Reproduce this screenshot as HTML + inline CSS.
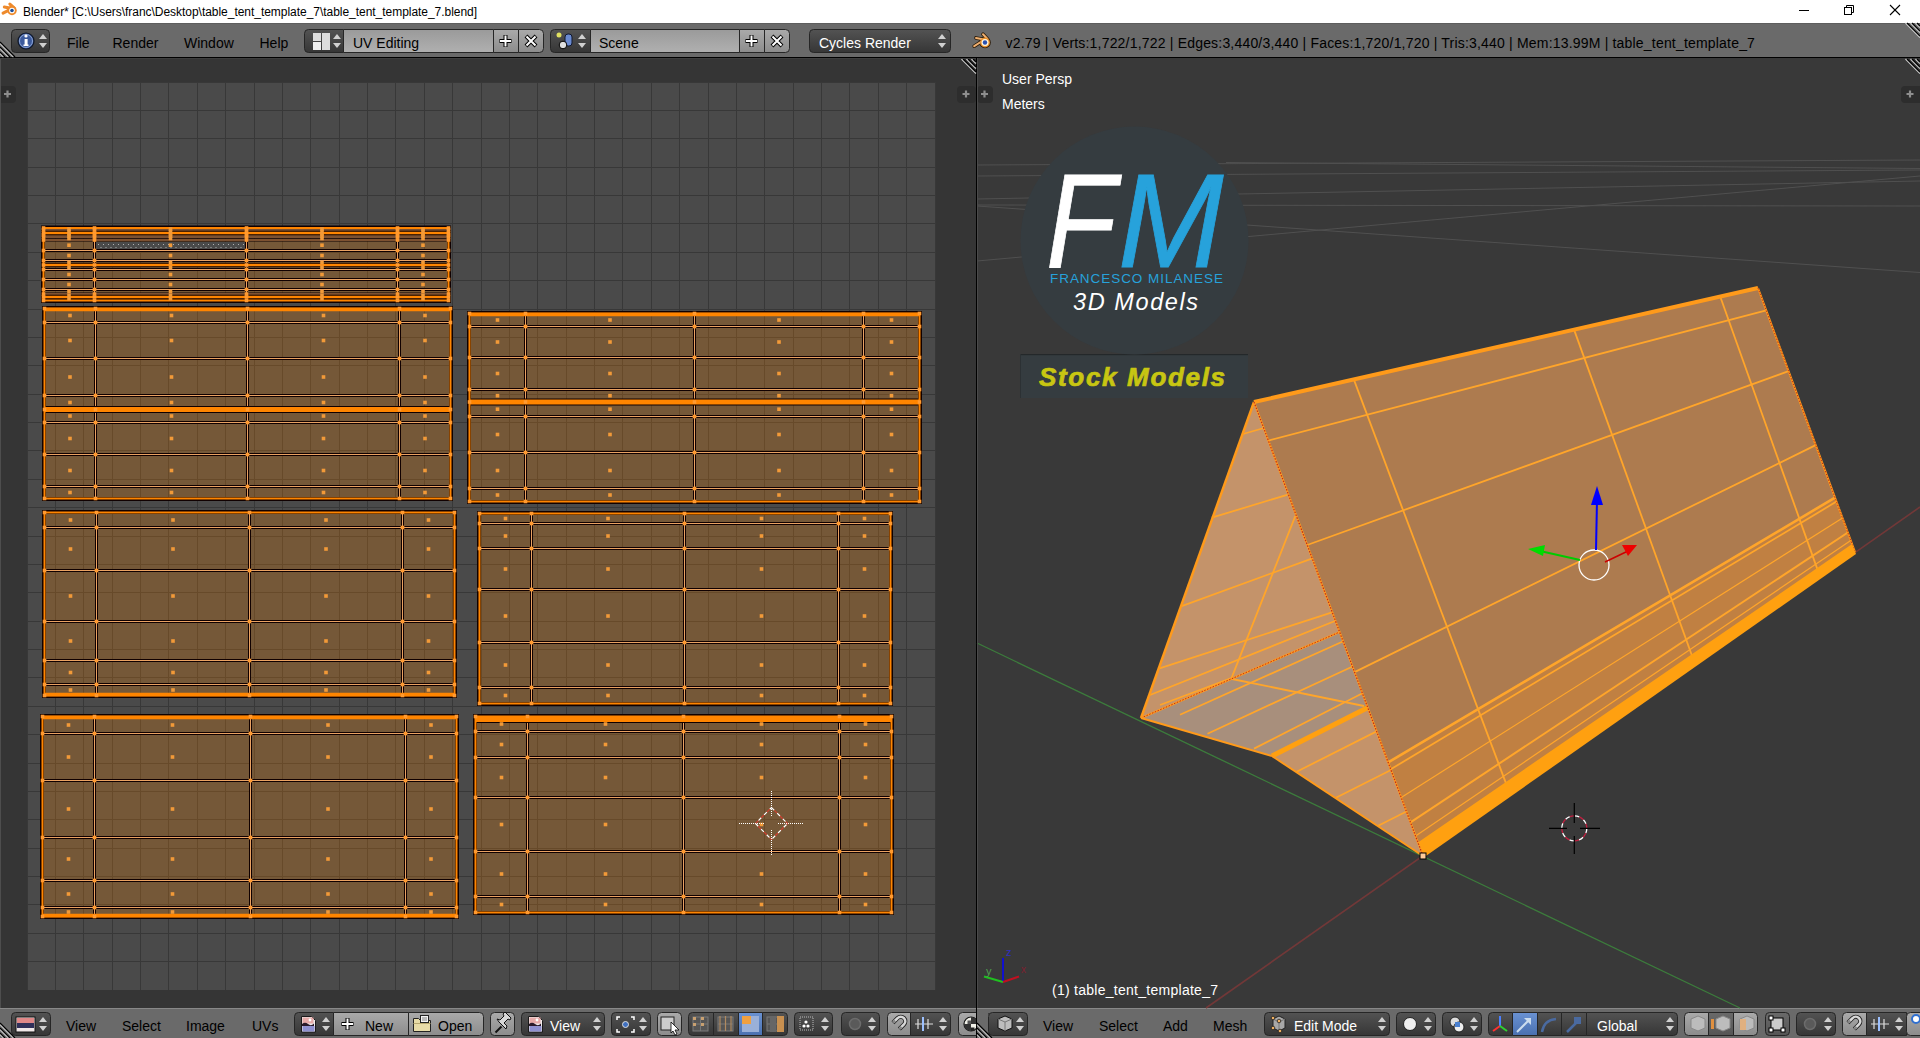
<!DOCTYPE html>
<html><head><meta charset="utf-8"><style>
html,body{margin:0;padding:0;width:1920px;height:1038px;overflow:hidden;background:#393939}
svg{position:absolute;left:0;top:0;font-family:"Liberation Sans", sans-serif}
</style></head><body>
<svg width="1920" height="1038" viewBox="0 0 1920 1038">
<defs>
<linearGradient id="gMenu" x1="0" y1="0" x2="0" y2="1"><stop offset="0" stop-color="#535353"/><stop offset="1" stop-color="#363636"/></linearGradient>
<linearGradient id="gText" x1="0" y1="0" x2="0" y2="1"><stop offset="0" stop-color="#9a9a9a"/><stop offset="1" stop-color="#b0b0b0"/></linearGradient>
<linearGradient id="gTool" x1="0" y1="0" x2="0" y2="1"><stop offset="0" stop-color="#aaaaaa"/><stop offset="1" stop-color="#8c8c8c"/></linearGradient>
<linearGradient id="gMid" x1="0" y1="0" x2="0" y2="1"><stop offset="0" stop-color="#6a6a6a"/><stop offset="1" stop-color="#555555"/></linearGradient>
<linearGradient id="gSel" x1="0" y1="0" x2="0" y2="1"><stop offset="0" stop-color="#6a92d2"/><stop offset="1" stop-color="#4a70b0"/></linearGradient>
</defs><rect x="0" y="0" width="1920" height="1038" fill="#393939" /><rect x="0" y="0" width="1920" height="23" fill="#ffffff" /><rect x="0" y="23" width="1920" height="34" fill="#6a6a6a" /><rect x="0" y="23" width="1920" height="1" fill="#5e5e5e" /><rect x="0" y="57" width="1920" height="1" fill="#000000" /><rect x="0" y="58" width="976" height="950" fill="#353535" /><rect x="976" y="58" width="1" height="950" fill="#000000" /><rect x="977" y="58" width="943" height="950" fill="#393939" /><rect x="0" y="1008" width="976" height="30" fill="#6a6a6a" /><rect x="977" y="1008" width="943" height="30" fill="#6a6a6a" /><rect x="0" y="1008" width="1920" height="1" fill="#888888" /><rect x="27" y="82" width="909" height="908" fill="#4a4a4a"/><rect x="27" y="82" width="1" height="908" fill="#383838"/><rect x="27" y="82" width="909" height="1" fill="#383838"/><rect x="55" y="82" width="1" height="908" fill="#383838"/><rect x="27" y="110" width="909" height="1" fill="#383838"/><rect x="83" y="82" width="1" height="908" fill="#383838"/><rect x="27" y="138" width="909" height="1" fill="#383838"/><rect x="112" y="82" width="1" height="908" fill="#383838"/><rect x="27" y="167" width="909" height="1" fill="#383838"/><rect x="140" y="82" width="1" height="908" fill="#383838"/><rect x="27" y="195" width="909" height="1" fill="#383838"/><rect x="168" y="82" width="1" height="908" fill="#383838"/><rect x="27" y="223" width="909" height="1" fill="#383838"/><rect x="197" y="82" width="1" height="908" fill="#383838"/><rect x="27" y="252" width="909" height="1" fill="#383838"/><rect x="225" y="82" width="1" height="908" fill="#383838"/><rect x="27" y="280" width="909" height="1" fill="#383838"/><rect x="254" y="82" width="1" height="908" fill="#383838"/><rect x="27" y="309" width="909" height="1" fill="#383838"/><rect x="282" y="82" width="1" height="908" fill="#383838"/><rect x="27" y="337" width="909" height="1" fill="#383838"/><rect x="310" y="82" width="1" height="908" fill="#383838"/><rect x="27" y="365" width="909" height="1" fill="#383838"/><rect x="339" y="82" width="1" height="908" fill="#383838"/><rect x="27" y="394" width="909" height="1" fill="#383838"/><rect x="367" y="82" width="1" height="908" fill="#383838"/><rect x="27" y="422" width="909" height="1" fill="#383838"/><rect x="395" y="82" width="1" height="908" fill="#383838"/><rect x="27" y="450" width="909" height="1" fill="#383838"/><rect x="424" y="82" width="1" height="908" fill="#383838"/><rect x="27" y="479" width="909" height="1" fill="#383838"/><rect x="452" y="82" width="1" height="908" fill="#383838"/><rect x="27" y="507" width="909" height="1" fill="#383838"/><rect x="481" y="82" width="1" height="908" fill="#383838"/><rect x="27" y="536" width="909" height="1" fill="#383838"/><rect x="509" y="82" width="1" height="908" fill="#383838"/><rect x="27" y="564" width="909" height="1" fill="#383838"/><rect x="537" y="82" width="1" height="908" fill="#383838"/><rect x="27" y="592" width="909" height="1" fill="#383838"/><rect x="566" y="82" width="1" height="908" fill="#383838"/><rect x="27" y="621" width="909" height="1" fill="#383838"/><rect x="594" y="82" width="1" height="908" fill="#383838"/><rect x="27" y="649" width="909" height="1" fill="#383838"/><rect x="622" y="82" width="1" height="908" fill="#383838"/><rect x="27" y="677" width="909" height="1" fill="#383838"/><rect x="651" y="82" width="1" height="908" fill="#383838"/><rect x="27" y="706" width="909" height="1" fill="#383838"/><rect x="679" y="82" width="1" height="908" fill="#383838"/><rect x="27" y="734" width="909" height="1" fill="#383838"/><rect x="708" y="82" width="1" height="908" fill="#383838"/><rect x="27" y="763" width="909" height="1" fill="#383838"/><rect x="736" y="82" width="1" height="908" fill="#383838"/><rect x="27" y="791" width="909" height="1" fill="#383838"/><rect x="764" y="82" width="1" height="908" fill="#383838"/><rect x="27" y="819" width="909" height="1" fill="#383838"/><rect x="793" y="82" width="1" height="908" fill="#383838"/><rect x="27" y="848" width="909" height="1" fill="#383838"/><rect x="821" y="82" width="1" height="908" fill="#383838"/><rect x="27" y="876" width="909" height="1" fill="#383838"/><rect x="849" y="82" width="1" height="908" fill="#383838"/><rect x="27" y="904" width="909" height="1" fill="#383838"/><rect x="878" y="82" width="1" height="908" fill="#383838"/><rect x="27" y="933" width="909" height="1" fill="#383838"/><rect x="906" y="82" width="1" height="908" fill="#383838"/><rect x="27" y="961" width="909" height="1" fill="#383838"/><rect x="935" y="82" width="1" height="908" fill="#383838"/><rect x="43.5" y="228" width="405.0" height="72.5" fill="rgba(255,133,0,0.24)"/><rect x="96" y="242" width="149" height="7" fill="#4a4a4a"/><rect x="98.0" y="244.0" width="1" height="1" fill="#b0b0b0"/><rect x="103.0" y="244.0" width="1" height="1" fill="#b0b0b0"/><rect x="108.0" y="244.0" width="1" height="1" fill="#b0b0b0"/><rect x="113.0" y="244.0" width="1" height="1" fill="#b0b0b0"/><rect x="118.0" y="244.0" width="1" height="1" fill="#b0b0b0"/><rect x="123.0" y="244.0" width="1" height="1" fill="#b0b0b0"/><rect x="128.0" y="244.0" width="1" height="1" fill="#b0b0b0"/><rect x="133.0" y="244.0" width="1" height="1" fill="#b0b0b0"/><rect x="138.0" y="244.0" width="1" height="1" fill="#b0b0b0"/><rect x="143.0" y="244.0" width="1" height="1" fill="#b0b0b0"/><rect x="148.0" y="244.0" width="1" height="1" fill="#b0b0b0"/><rect x="153.0" y="244.0" width="1" height="1" fill="#b0b0b0"/><rect x="158.0" y="244.0" width="1" height="1" fill="#b0b0b0"/><rect x="163.0" y="244.0" width="1" height="1" fill="#b0b0b0"/><rect x="168.0" y="244.0" width="1" height="1" fill="#b0b0b0"/><rect x="173.0" y="244.0" width="1" height="1" fill="#b0b0b0"/><rect x="178.0" y="244.0" width="1" height="1" fill="#b0b0b0"/><rect x="183.0" y="244.0" width="1" height="1" fill="#b0b0b0"/><rect x="188.0" y="244.0" width="1" height="1" fill="#b0b0b0"/><rect x="193.0" y="244.0" width="1" height="1" fill="#b0b0b0"/><rect x="198.0" y="244.0" width="1" height="1" fill="#b0b0b0"/><rect x="203.0" y="244.0" width="1" height="1" fill="#b0b0b0"/><rect x="208.0" y="244.0" width="1" height="1" fill="#b0b0b0"/><rect x="213.0" y="244.0" width="1" height="1" fill="#b0b0b0"/><rect x="218.0" y="244.0" width="1" height="1" fill="#b0b0b0"/><rect x="223.0" y="244.0" width="1" height="1" fill="#b0b0b0"/><rect x="228.0" y="244.0" width="1" height="1" fill="#b0b0b0"/><rect x="233.0" y="244.0" width="1" height="1" fill="#b0b0b0"/><rect x="238.0" y="244.0" width="1" height="1" fill="#b0b0b0"/><rect x="243.0" y="244.0" width="1" height="1" fill="#b0b0b0"/><rect x="100.5" y="247.0" width="1" height="1" fill="#b0b0b0"/><rect x="105.5" y="247.0" width="1" height="1" fill="#b0b0b0"/><rect x="110.5" y="247.0" width="1" height="1" fill="#b0b0b0"/><rect x="115.5" y="247.0" width="1" height="1" fill="#b0b0b0"/><rect x="120.5" y="247.0" width="1" height="1" fill="#b0b0b0"/><rect x="125.5" y="247.0" width="1" height="1" fill="#b0b0b0"/><rect x="130.5" y="247.0" width="1" height="1" fill="#b0b0b0"/><rect x="135.5" y="247.0" width="1" height="1" fill="#b0b0b0"/><rect x="140.5" y="247.0" width="1" height="1" fill="#b0b0b0"/><rect x="145.5" y="247.0" width="1" height="1" fill="#b0b0b0"/><rect x="150.5" y="247.0" width="1" height="1" fill="#b0b0b0"/><rect x="155.5" y="247.0" width="1" height="1" fill="#b0b0b0"/><rect x="160.5" y="247.0" width="1" height="1" fill="#b0b0b0"/><rect x="165.5" y="247.0" width="1" height="1" fill="#b0b0b0"/><rect x="170.5" y="247.0" width="1" height="1" fill="#b0b0b0"/><rect x="175.5" y="247.0" width="1" height="1" fill="#b0b0b0"/><rect x="180.5" y="247.0" width="1" height="1" fill="#b0b0b0"/><rect x="185.5" y="247.0" width="1" height="1" fill="#b0b0b0"/><rect x="190.5" y="247.0" width="1" height="1" fill="#b0b0b0"/><rect x="195.5" y="247.0" width="1" height="1" fill="#b0b0b0"/><rect x="200.5" y="247.0" width="1" height="1" fill="#b0b0b0"/><rect x="205.5" y="247.0" width="1" height="1" fill="#b0b0b0"/><rect x="210.5" y="247.0" width="1" height="1" fill="#b0b0b0"/><rect x="215.5" y="247.0" width="1" height="1" fill="#b0b0b0"/><rect x="220.5" y="247.0" width="1" height="1" fill="#b0b0b0"/><rect x="225.5" y="247.0" width="1" height="1" fill="#b0b0b0"/><rect x="230.5" y="247.0" width="1" height="1" fill="#b0b0b0"/><rect x="235.5" y="247.0" width="1" height="1" fill="#b0b0b0"/><rect x="240.5" y="247.0" width="1" height="1" fill="#b0b0b0"/><rect x="42.5" y="227" width="407.0" height="74.5" fill="none" stroke="#100000" stroke-width="3"/><line x1="42.50" y1="228.00" x2="449.50" y2="228.00" stroke="#100000" stroke-width="3" /><line x1="42.50" y1="230.00" x2="449.50" y2="230.00" stroke="#100000" stroke-width="3" /><line x1="42.50" y1="233.00" x2="449.50" y2="233.00" stroke="#100000" stroke-width="3" /><line x1="42.50" y1="235.00" x2="449.50" y2="235.00" stroke="#100000" stroke-width="3" /><line x1="42.50" y1="237.00" x2="449.50" y2="237.00" stroke="#100000" stroke-width="3" /><line x1="42.50" y1="240.00" x2="449.50" y2="240.00" stroke="#100000" stroke-width="3" /><line x1="42.50" y1="250.50" x2="449.50" y2="250.50" stroke="#100000" stroke-width="3" /><line x1="42.50" y1="260.50" x2="449.50" y2="260.50" stroke="#100000" stroke-width="3" /><line x1="42.50" y1="265.00" x2="449.50" y2="265.00" stroke="#100000" stroke-width="3" /><line x1="42.50" y1="269.50" x2="449.50" y2="269.50" stroke="#100000" stroke-width="3" /><line x1="42.50" y1="279.50" x2="449.50" y2="279.50" stroke="#100000" stroke-width="3" /><line x1="42.50" y1="289.50" x2="449.50" y2="289.50" stroke="#100000" stroke-width="3" /><line x1="42.50" y1="294.00" x2="449.50" y2="294.00" stroke="#100000" stroke-width="3" /><line x1="42.50" y1="297.00" x2="449.50" y2="297.00" stroke="#100000" stroke-width="3" /><line x1="42.50" y1="300.50" x2="449.50" y2="300.50" stroke="#100000" stroke-width="3" /><line x1="43.50" y1="227.00" x2="43.50" y2="301.50" stroke="#100000" stroke-width="3" /><line x1="94.50" y1="227.00" x2="94.50" y2="301.50" stroke="#100000" stroke-width="3" /><line x1="246.50" y1="227.00" x2="246.50" y2="301.50" stroke="#100000" stroke-width="3" /><line x1="397.50" y1="227.00" x2="397.50" y2="301.50" stroke="#100000" stroke-width="3" /><line x1="448.50" y1="227.00" x2="448.50" y2="301.50" stroke="#100000" stroke-width="3" /><line x1="43.50" y1="228.00" x2="448.50" y2="228.00" stroke="#eaa262" stroke-width="1" /><line x1="43.50" y1="230.00" x2="448.50" y2="230.00" stroke="#eaa262" stroke-width="1" /><line x1="43.50" y1="233.00" x2="448.50" y2="233.00" stroke="#eaa262" stroke-width="1" /><line x1="43.50" y1="235.00" x2="448.50" y2="235.00" stroke="#eaa262" stroke-width="1" /><line x1="43.50" y1="237.00" x2="448.50" y2="237.00" stroke="#eaa262" stroke-width="1" /><line x1="43.50" y1="240.00" x2="448.50" y2="240.00" stroke="#eaa262" stroke-width="1" /><line x1="43.50" y1="250.50" x2="448.50" y2="250.50" stroke="#eaa262" stroke-width="1" /><line x1="43.50" y1="260.50" x2="448.50" y2="260.50" stroke="#eaa262" stroke-width="1" /><line x1="43.50" y1="265.00" x2="448.50" y2="265.00" stroke="#eaa262" stroke-width="1" /><line x1="43.50" y1="269.50" x2="448.50" y2="269.50" stroke="#eaa262" stroke-width="1" /><line x1="43.50" y1="279.50" x2="448.50" y2="279.50" stroke="#eaa262" stroke-width="1" /><line x1="43.50" y1="289.50" x2="448.50" y2="289.50" stroke="#eaa262" stroke-width="1" /><line x1="43.50" y1="294.00" x2="448.50" y2="294.00" stroke="#eaa262" stroke-width="1" /><line x1="43.50" y1="297.00" x2="448.50" y2="297.00" stroke="#eaa262" stroke-width="1" /><line x1="43.50" y1="300.50" x2="448.50" y2="300.50" stroke="#eaa262" stroke-width="1" /><line x1="43.50" y1="228.00" x2="43.50" y2="300.50" stroke="#eaa262" stroke-width="1" /><line x1="94.50" y1="228.00" x2="94.50" y2="300.50" stroke="#eaa262" stroke-width="1" /><line x1="246.50" y1="228.00" x2="246.50" y2="300.50" stroke="#eaa262" stroke-width="1" /><line x1="397.50" y1="228.00" x2="397.50" y2="300.50" stroke="#eaa262" stroke-width="1" /><line x1="448.50" y1="228.00" x2="448.50" y2="300.50" stroke="#eaa262" stroke-width="1" /><line x1="42.50" y1="233.00" x2="449.50" y2="233.00" stroke="#100000" stroke-width="4.6" /><line x1="43.50" y1="233.00" x2="448.50" y2="233.00" stroke="#ff8500" stroke-width="2.6" /><line x1="42.50" y1="265.00" x2="449.50" y2="265.00" stroke="#100000" stroke-width="4.6" /><line x1="43.50" y1="265.00" x2="448.50" y2="265.00" stroke="#ff8500" stroke-width="2.6" /><line x1="42.50" y1="297.00" x2="449.50" y2="297.00" stroke="#100000" stroke-width="4.6" /><line x1="43.50" y1="297.00" x2="448.50" y2="297.00" stroke="#ff8500" stroke-width="2.6" /><rect x="43.5" y="228" width="405.0" height="72.5" fill="none" stroke="#ff8500" stroke-width="2"/><rect x="41.7" y="226.2" width="3.6" height="3.6" fill="#ff9a30"/><rect x="41.7" y="228.2" width="3.6" height="3.6" fill="#ff9a30"/><rect x="41.7" y="231.2" width="3.6" height="3.6" fill="#ff9a30"/><rect x="41.7" y="233.2" width="3.6" height="3.6" fill="#ff9a30"/><rect x="41.7" y="235.2" width="3.6" height="3.6" fill="#ff9a30"/><rect x="41.7" y="238.2" width="3.6" height="3.6" fill="#ff9a30"/><rect x="41.7" y="248.7" width="3.6" height="3.6" fill="#ff9a30"/><rect x="41.7" y="258.7" width="3.6" height="3.6" fill="#ff9a30"/><rect x="41.7" y="263.2" width="3.6" height="3.6" fill="#ff9a30"/><rect x="41.7" y="267.7" width="3.6" height="3.6" fill="#ff9a30"/><rect x="41.7" y="277.7" width="3.6" height="3.6" fill="#ff9a30"/><rect x="41.7" y="287.7" width="3.6" height="3.6" fill="#ff9a30"/><rect x="41.7" y="292.2" width="3.6" height="3.6" fill="#ff9a30"/><rect x="41.7" y="295.2" width="3.6" height="3.6" fill="#ff9a30"/><rect x="41.7" y="298.7" width="3.6" height="3.6" fill="#ff9a30"/><rect x="92.7" y="226.2" width="3.6" height="3.6" fill="#ff9a30"/><rect x="92.7" y="228.2" width="3.6" height="3.6" fill="#ff9a30"/><rect x="92.7" y="231.2" width="3.6" height="3.6" fill="#ff9a30"/><rect x="92.7" y="233.2" width="3.6" height="3.6" fill="#ff9a30"/><rect x="92.7" y="235.2" width="3.6" height="3.6" fill="#ff9a30"/><rect x="92.7" y="238.2" width="3.6" height="3.6" fill="#ff9a30"/><rect x="92.7" y="248.7" width="3.6" height="3.6" fill="#ff9a30"/><rect x="92.7" y="258.7" width="3.6" height="3.6" fill="#ff9a30"/><rect x="92.7" y="263.2" width="3.6" height="3.6" fill="#ff9a30"/><rect x="92.7" y="267.7" width="3.6" height="3.6" fill="#ff9a30"/><rect x="92.7" y="277.7" width="3.6" height="3.6" fill="#ff9a30"/><rect x="92.7" y="287.7" width="3.6" height="3.6" fill="#ff9a30"/><rect x="92.7" y="292.2" width="3.6" height="3.6" fill="#ff9a30"/><rect x="92.7" y="295.2" width="3.6" height="3.6" fill="#ff9a30"/><rect x="92.7" y="298.7" width="3.6" height="3.6" fill="#ff9a30"/><rect x="244.7" y="226.2" width="3.6" height="3.6" fill="#ff9a30"/><rect x="244.7" y="228.2" width="3.6" height="3.6" fill="#ff9a30"/><rect x="244.7" y="231.2" width="3.6" height="3.6" fill="#ff9a30"/><rect x="244.7" y="233.2" width="3.6" height="3.6" fill="#ff9a30"/><rect x="244.7" y="235.2" width="3.6" height="3.6" fill="#ff9a30"/><rect x="244.7" y="238.2" width="3.6" height="3.6" fill="#ff9a30"/><rect x="244.7" y="248.7" width="3.6" height="3.6" fill="#ff9a30"/><rect x="244.7" y="258.7" width="3.6" height="3.6" fill="#ff9a30"/><rect x="244.7" y="263.2" width="3.6" height="3.6" fill="#ff9a30"/><rect x="244.7" y="267.7" width="3.6" height="3.6" fill="#ff9a30"/><rect x="244.7" y="277.7" width="3.6" height="3.6" fill="#ff9a30"/><rect x="244.7" y="287.7" width="3.6" height="3.6" fill="#ff9a30"/><rect x="244.7" y="292.2" width="3.6" height="3.6" fill="#ff9a30"/><rect x="244.7" y="295.2" width="3.6" height="3.6" fill="#ff9a30"/><rect x="244.7" y="298.7" width="3.6" height="3.6" fill="#ff9a30"/><rect x="395.7" y="226.2" width="3.6" height="3.6" fill="#ff9a30"/><rect x="395.7" y="228.2" width="3.6" height="3.6" fill="#ff9a30"/><rect x="395.7" y="231.2" width="3.6" height="3.6" fill="#ff9a30"/><rect x="395.7" y="233.2" width="3.6" height="3.6" fill="#ff9a30"/><rect x="395.7" y="235.2" width="3.6" height="3.6" fill="#ff9a30"/><rect x="395.7" y="238.2" width="3.6" height="3.6" fill="#ff9a30"/><rect x="395.7" y="248.7" width="3.6" height="3.6" fill="#ff9a30"/><rect x="395.7" y="258.7" width="3.6" height="3.6" fill="#ff9a30"/><rect x="395.7" y="263.2" width="3.6" height="3.6" fill="#ff9a30"/><rect x="395.7" y="267.7" width="3.6" height="3.6" fill="#ff9a30"/><rect x="395.7" y="277.7" width="3.6" height="3.6" fill="#ff9a30"/><rect x="395.7" y="287.7" width="3.6" height="3.6" fill="#ff9a30"/><rect x="395.7" y="292.2" width="3.6" height="3.6" fill="#ff9a30"/><rect x="395.7" y="295.2" width="3.6" height="3.6" fill="#ff9a30"/><rect x="395.7" y="298.7" width="3.6" height="3.6" fill="#ff9a30"/><rect x="446.7" y="226.2" width="3.6" height="3.6" fill="#ff9a30"/><rect x="446.7" y="228.2" width="3.6" height="3.6" fill="#ff9a30"/><rect x="446.7" y="231.2" width="3.6" height="3.6" fill="#ff9a30"/><rect x="446.7" y="233.2" width="3.6" height="3.6" fill="#ff9a30"/><rect x="446.7" y="235.2" width="3.6" height="3.6" fill="#ff9a30"/><rect x="446.7" y="238.2" width="3.6" height="3.6" fill="#ff9a30"/><rect x="446.7" y="248.7" width="3.6" height="3.6" fill="#ff9a30"/><rect x="446.7" y="258.7" width="3.6" height="3.6" fill="#ff9a30"/><rect x="446.7" y="263.2" width="3.6" height="3.6" fill="#ff9a30"/><rect x="446.7" y="267.7" width="3.6" height="3.6" fill="#ff9a30"/><rect x="446.7" y="277.7" width="3.6" height="3.6" fill="#ff9a30"/><rect x="446.7" y="287.7" width="3.6" height="3.6" fill="#ff9a30"/><rect x="446.7" y="292.2" width="3.6" height="3.6" fill="#ff9a30"/><rect x="446.7" y="295.2" width="3.6" height="3.6" fill="#ff9a30"/><rect x="446.7" y="298.7" width="3.6" height="3.6" fill="#ff9a30"/><rect x="67.2" y="227.2" width="3.6" height="3.6" fill="#f29a38"/><rect x="67.2" y="229.7" width="3.6" height="3.6" fill="#f29a38"/><rect x="67.2" y="232.2" width="3.6" height="3.6" fill="#f29a38"/><rect x="67.2" y="234.2" width="3.6" height="3.6" fill="#f29a38"/><rect x="67.2" y="236.7" width="3.6" height="3.6" fill="#f29a38"/><rect x="67.2" y="243.4" width="3.6" height="3.6" fill="#f29a38"/><rect x="67.2" y="253.7" width="3.6" height="3.6" fill="#f29a38"/><rect x="67.2" y="260.9" width="3.6" height="3.6" fill="#f29a38"/><rect x="67.2" y="265.4" width="3.6" height="3.6" fill="#f29a38"/><rect x="67.2" y="272.7" width="3.6" height="3.6" fill="#f29a38"/><rect x="67.2" y="282.7" width="3.6" height="3.6" fill="#f29a38"/><rect x="67.2" y="289.9" width="3.6" height="3.6" fill="#f29a38"/><rect x="67.2" y="293.7" width="3.6" height="3.6" fill="#f29a38"/><rect x="67.2" y="296.9" width="3.6" height="3.6" fill="#f29a38"/><rect x="168.7" y="227.2" width="3.6" height="3.6" fill="#f29a38"/><rect x="168.7" y="229.7" width="3.6" height="3.6" fill="#f29a38"/><rect x="168.7" y="232.2" width="3.6" height="3.6" fill="#f29a38"/><rect x="168.7" y="234.2" width="3.6" height="3.6" fill="#f29a38"/><rect x="168.7" y="236.7" width="3.6" height="3.6" fill="#f29a38"/><rect x="168.7" y="243.4" width="3.6" height="3.6" fill="#f29a38"/><rect x="168.7" y="253.7" width="3.6" height="3.6" fill="#f29a38"/><rect x="168.7" y="260.9" width="3.6" height="3.6" fill="#f29a38"/><rect x="168.7" y="265.4" width="3.6" height="3.6" fill="#f29a38"/><rect x="168.7" y="272.7" width="3.6" height="3.6" fill="#f29a38"/><rect x="168.7" y="282.7" width="3.6" height="3.6" fill="#f29a38"/><rect x="168.7" y="289.9" width="3.6" height="3.6" fill="#f29a38"/><rect x="168.7" y="293.7" width="3.6" height="3.6" fill="#f29a38"/><rect x="168.7" y="296.9" width="3.6" height="3.6" fill="#f29a38"/><rect x="320.2" y="227.2" width="3.6" height="3.6" fill="#f29a38"/><rect x="320.2" y="229.7" width="3.6" height="3.6" fill="#f29a38"/><rect x="320.2" y="232.2" width="3.6" height="3.6" fill="#f29a38"/><rect x="320.2" y="234.2" width="3.6" height="3.6" fill="#f29a38"/><rect x="320.2" y="236.7" width="3.6" height="3.6" fill="#f29a38"/><rect x="320.2" y="243.4" width="3.6" height="3.6" fill="#f29a38"/><rect x="320.2" y="253.7" width="3.6" height="3.6" fill="#f29a38"/><rect x="320.2" y="260.9" width="3.6" height="3.6" fill="#f29a38"/><rect x="320.2" y="265.4" width="3.6" height="3.6" fill="#f29a38"/><rect x="320.2" y="272.7" width="3.6" height="3.6" fill="#f29a38"/><rect x="320.2" y="282.7" width="3.6" height="3.6" fill="#f29a38"/><rect x="320.2" y="289.9" width="3.6" height="3.6" fill="#f29a38"/><rect x="320.2" y="293.7" width="3.6" height="3.6" fill="#f29a38"/><rect x="320.2" y="296.9" width="3.6" height="3.6" fill="#f29a38"/><rect x="421.2" y="227.2" width="3.6" height="3.6" fill="#f29a38"/><rect x="421.2" y="229.7" width="3.6" height="3.6" fill="#f29a38"/><rect x="421.2" y="232.2" width="3.6" height="3.6" fill="#f29a38"/><rect x="421.2" y="234.2" width="3.6" height="3.6" fill="#f29a38"/><rect x="421.2" y="236.7" width="3.6" height="3.6" fill="#f29a38"/><rect x="421.2" y="243.4" width="3.6" height="3.6" fill="#f29a38"/><rect x="421.2" y="253.7" width="3.6" height="3.6" fill="#f29a38"/><rect x="421.2" y="260.9" width="3.6" height="3.6" fill="#f29a38"/><rect x="421.2" y="265.4" width="3.6" height="3.6" fill="#f29a38"/><rect x="421.2" y="272.7" width="3.6" height="3.6" fill="#f29a38"/><rect x="421.2" y="282.7" width="3.6" height="3.6" fill="#f29a38"/><rect x="421.2" y="289.9" width="3.6" height="3.6" fill="#f29a38"/><rect x="421.2" y="293.7" width="3.6" height="3.6" fill="#f29a38"/><rect x="421.2" y="296.9" width="3.6" height="3.6" fill="#f29a38"/><rect x="44.5" y="308.5" width="406.0" height="190.0" fill="rgba(255,133,0,0.24)"/><rect x="43.5" y="307.5" width="408.0" height="192.0" fill="none" stroke="#100000" stroke-width="3"/><line x1="43.50" y1="308.50" x2="451.50" y2="308.50" stroke="#100000" stroke-width="3" /><line x1="43.50" y1="322.50" x2="451.50" y2="322.50" stroke="#100000" stroke-width="3" /><line x1="43.50" y1="358.50" x2="451.50" y2="358.50" stroke="#100000" stroke-width="3" /><line x1="43.50" y1="395.50" x2="451.50" y2="395.50" stroke="#100000" stroke-width="3" /><line x1="43.50" y1="409.50" x2="451.50" y2="409.50" stroke="#100000" stroke-width="3" /><line x1="43.50" y1="422.50" x2="451.50" y2="422.50" stroke="#100000" stroke-width="3" /><line x1="43.50" y1="454.50" x2="451.50" y2="454.50" stroke="#100000" stroke-width="3" /><line x1="43.50" y1="486.50" x2="451.50" y2="486.50" stroke="#100000" stroke-width="3" /><line x1="43.50" y1="498.50" x2="451.50" y2="498.50" stroke="#100000" stroke-width="3" /><line x1="44.50" y1="307.50" x2="44.50" y2="499.50" stroke="#100000" stroke-width="3" /><line x1="95.50" y1="307.50" x2="95.50" y2="499.50" stroke="#100000" stroke-width="3" /><line x1="247.50" y1="307.50" x2="247.50" y2="499.50" stroke="#100000" stroke-width="3" /><line x1="399.50" y1="307.50" x2="399.50" y2="499.50" stroke="#100000" stroke-width="3" /><line x1="450.50" y1="307.50" x2="450.50" y2="499.50" stroke="#100000" stroke-width="3" /><line x1="44.50" y1="308.50" x2="450.50" y2="308.50" stroke="#eaa262" stroke-width="1" /><line x1="44.50" y1="322.50" x2="450.50" y2="322.50" stroke="#eaa262" stroke-width="1" /><line x1="44.50" y1="358.50" x2="450.50" y2="358.50" stroke="#eaa262" stroke-width="1" /><line x1="44.50" y1="395.50" x2="450.50" y2="395.50" stroke="#eaa262" stroke-width="1" /><line x1="44.50" y1="409.50" x2="450.50" y2="409.50" stroke="#eaa262" stroke-width="1" /><line x1="44.50" y1="422.50" x2="450.50" y2="422.50" stroke="#eaa262" stroke-width="1" /><line x1="44.50" y1="454.50" x2="450.50" y2="454.50" stroke="#eaa262" stroke-width="1" /><line x1="44.50" y1="486.50" x2="450.50" y2="486.50" stroke="#eaa262" stroke-width="1" /><line x1="44.50" y1="498.50" x2="450.50" y2="498.50" stroke="#eaa262" stroke-width="1" /><line x1="44.50" y1="308.50" x2="44.50" y2="498.50" stroke="#eaa262" stroke-width="1" /><line x1="95.50" y1="308.50" x2="95.50" y2="498.50" stroke="#eaa262" stroke-width="1" /><line x1="247.50" y1="308.50" x2="247.50" y2="498.50" stroke="#eaa262" stroke-width="1" /><line x1="399.50" y1="308.50" x2="399.50" y2="498.50" stroke="#eaa262" stroke-width="1" /><line x1="450.50" y1="308.50" x2="450.50" y2="498.50" stroke="#eaa262" stroke-width="1" /><line x1="43.50" y1="409.50" x2="451.50" y2="409.50" stroke="#100000" stroke-width="7" /><line x1="44.50" y1="409.50" x2="450.50" y2="409.50" stroke="#ff8500" stroke-width="5" /><rect x="44.5" y="308.5" width="406.0" height="190.0" fill="none" stroke="#ff8500" stroke-width="2"/><line x1="44.50" y1="309.50" x2="450.50" y2="309.50" stroke="#ff8500" stroke-width="3.5" /><rect x="42.7" y="306.7" width="3.6" height="3.6" fill="#ff9a30"/><rect x="42.7" y="320.7" width="3.6" height="3.6" fill="#ff9a30"/><rect x="42.7" y="356.7" width="3.6" height="3.6" fill="#ff9a30"/><rect x="42.7" y="393.7" width="3.6" height="3.6" fill="#ff9a30"/><rect x="42.7" y="407.7" width="3.6" height="3.6" fill="#ff9a30"/><rect x="42.7" y="420.7" width="3.6" height="3.6" fill="#ff9a30"/><rect x="42.7" y="452.7" width="3.6" height="3.6" fill="#ff9a30"/><rect x="42.7" y="484.7" width="3.6" height="3.6" fill="#ff9a30"/><rect x="42.7" y="496.7" width="3.6" height="3.6" fill="#ff9a30"/><rect x="93.7" y="306.7" width="3.6" height="3.6" fill="#ff9a30"/><rect x="93.7" y="320.7" width="3.6" height="3.6" fill="#ff9a30"/><rect x="93.7" y="356.7" width="3.6" height="3.6" fill="#ff9a30"/><rect x="93.7" y="393.7" width="3.6" height="3.6" fill="#ff9a30"/><rect x="93.7" y="407.7" width="3.6" height="3.6" fill="#ff9a30"/><rect x="93.7" y="420.7" width="3.6" height="3.6" fill="#ff9a30"/><rect x="93.7" y="452.7" width="3.6" height="3.6" fill="#ff9a30"/><rect x="93.7" y="484.7" width="3.6" height="3.6" fill="#ff9a30"/><rect x="93.7" y="496.7" width="3.6" height="3.6" fill="#ff9a30"/><rect x="245.7" y="306.7" width="3.6" height="3.6" fill="#ff9a30"/><rect x="245.7" y="320.7" width="3.6" height="3.6" fill="#ff9a30"/><rect x="245.7" y="356.7" width="3.6" height="3.6" fill="#ff9a30"/><rect x="245.7" y="393.7" width="3.6" height="3.6" fill="#ff9a30"/><rect x="245.7" y="407.7" width="3.6" height="3.6" fill="#ff9a30"/><rect x="245.7" y="420.7" width="3.6" height="3.6" fill="#ff9a30"/><rect x="245.7" y="452.7" width="3.6" height="3.6" fill="#ff9a30"/><rect x="245.7" y="484.7" width="3.6" height="3.6" fill="#ff9a30"/><rect x="245.7" y="496.7" width="3.6" height="3.6" fill="#ff9a30"/><rect x="397.7" y="306.7" width="3.6" height="3.6" fill="#ff9a30"/><rect x="397.7" y="320.7" width="3.6" height="3.6" fill="#ff9a30"/><rect x="397.7" y="356.7" width="3.6" height="3.6" fill="#ff9a30"/><rect x="397.7" y="393.7" width="3.6" height="3.6" fill="#ff9a30"/><rect x="397.7" y="407.7" width="3.6" height="3.6" fill="#ff9a30"/><rect x="397.7" y="420.7" width="3.6" height="3.6" fill="#ff9a30"/><rect x="397.7" y="452.7" width="3.6" height="3.6" fill="#ff9a30"/><rect x="397.7" y="484.7" width="3.6" height="3.6" fill="#ff9a30"/><rect x="397.7" y="496.7" width="3.6" height="3.6" fill="#ff9a30"/><rect x="448.7" y="306.7" width="3.6" height="3.6" fill="#ff9a30"/><rect x="448.7" y="320.7" width="3.6" height="3.6" fill="#ff9a30"/><rect x="448.7" y="356.7" width="3.6" height="3.6" fill="#ff9a30"/><rect x="448.7" y="393.7" width="3.6" height="3.6" fill="#ff9a30"/><rect x="448.7" y="407.7" width="3.6" height="3.6" fill="#ff9a30"/><rect x="448.7" y="420.7" width="3.6" height="3.6" fill="#ff9a30"/><rect x="448.7" y="452.7" width="3.6" height="3.6" fill="#ff9a30"/><rect x="448.7" y="484.7" width="3.6" height="3.6" fill="#ff9a30"/><rect x="448.7" y="496.7" width="3.6" height="3.6" fill="#ff9a30"/><rect x="68.2" y="313.7" width="3.6" height="3.6" fill="#f29a38"/><rect x="68.2" y="338.7" width="3.6" height="3.6" fill="#f29a38"/><rect x="68.2" y="375.2" width="3.6" height="3.6" fill="#f29a38"/><rect x="68.2" y="400.7" width="3.6" height="3.6" fill="#f29a38"/><rect x="68.2" y="414.2" width="3.6" height="3.6" fill="#f29a38"/><rect x="68.2" y="436.7" width="3.6" height="3.6" fill="#f29a38"/><rect x="68.2" y="468.7" width="3.6" height="3.6" fill="#f29a38"/><rect x="68.2" y="490.7" width="3.6" height="3.6" fill="#f29a38"/><rect x="169.7" y="313.7" width="3.6" height="3.6" fill="#f29a38"/><rect x="169.7" y="338.7" width="3.6" height="3.6" fill="#f29a38"/><rect x="169.7" y="375.2" width="3.6" height="3.6" fill="#f29a38"/><rect x="169.7" y="400.7" width="3.6" height="3.6" fill="#f29a38"/><rect x="169.7" y="414.2" width="3.6" height="3.6" fill="#f29a38"/><rect x="169.7" y="436.7" width="3.6" height="3.6" fill="#f29a38"/><rect x="169.7" y="468.7" width="3.6" height="3.6" fill="#f29a38"/><rect x="169.7" y="490.7" width="3.6" height="3.6" fill="#f29a38"/><rect x="321.7" y="313.7" width="3.6" height="3.6" fill="#f29a38"/><rect x="321.7" y="338.7" width="3.6" height="3.6" fill="#f29a38"/><rect x="321.7" y="375.2" width="3.6" height="3.6" fill="#f29a38"/><rect x="321.7" y="400.7" width="3.6" height="3.6" fill="#f29a38"/><rect x="321.7" y="414.2" width="3.6" height="3.6" fill="#f29a38"/><rect x="321.7" y="436.7" width="3.6" height="3.6" fill="#f29a38"/><rect x="321.7" y="468.7" width="3.6" height="3.6" fill="#f29a38"/><rect x="321.7" y="490.7" width="3.6" height="3.6" fill="#f29a38"/><rect x="423.2" y="313.7" width="3.6" height="3.6" fill="#f29a38"/><rect x="423.2" y="338.7" width="3.6" height="3.6" fill="#f29a38"/><rect x="423.2" y="375.2" width="3.6" height="3.6" fill="#f29a38"/><rect x="423.2" y="400.7" width="3.6" height="3.6" fill="#f29a38"/><rect x="423.2" y="414.2" width="3.6" height="3.6" fill="#f29a38"/><rect x="423.2" y="436.7" width="3.6" height="3.6" fill="#f29a38"/><rect x="423.2" y="468.7" width="3.6" height="3.6" fill="#f29a38"/><rect x="423.2" y="490.7" width="3.6" height="3.6" fill="#f29a38"/><rect x="469.5" y="313.5" width="450.0" height="188.0" fill="rgba(255,133,0,0.24)"/><rect x="468.5" y="312.5" width="452.0" height="190.0" fill="none" stroke="#100000" stroke-width="3"/><line x1="468.50" y1="313.50" x2="920.50" y2="313.50" stroke="#100000" stroke-width="3" /><line x1="468.50" y1="326.50" x2="920.50" y2="326.50" stroke="#100000" stroke-width="3" /><line x1="468.50" y1="357.50" x2="920.50" y2="357.50" stroke="#100000" stroke-width="3" /><line x1="468.50" y1="389.50" x2="920.50" y2="389.50" stroke="#100000" stroke-width="3" /><line x1="468.50" y1="402.00" x2="920.50" y2="402.00" stroke="#100000" stroke-width="3" /><line x1="468.50" y1="416.50" x2="920.50" y2="416.50" stroke="#100000" stroke-width="3" /><line x1="468.50" y1="452.50" x2="920.50" y2="452.50" stroke="#100000" stroke-width="3" /><line x1="468.50" y1="488.50" x2="920.50" y2="488.50" stroke="#100000" stroke-width="3" /><line x1="468.50" y1="501.50" x2="920.50" y2="501.50" stroke="#100000" stroke-width="3" /><line x1="469.50" y1="312.50" x2="469.50" y2="502.50" stroke="#100000" stroke-width="3" /><line x1="525.50" y1="312.50" x2="525.50" y2="502.50" stroke="#100000" stroke-width="3" /><line x1="694.50" y1="312.50" x2="694.50" y2="502.50" stroke="#100000" stroke-width="3" /><line x1="863.50" y1="312.50" x2="863.50" y2="502.50" stroke="#100000" stroke-width="3" /><line x1="919.50" y1="312.50" x2="919.50" y2="502.50" stroke="#100000" stroke-width="3" /><line x1="469.50" y1="313.50" x2="919.50" y2="313.50" stroke="#eaa262" stroke-width="1" /><line x1="469.50" y1="326.50" x2="919.50" y2="326.50" stroke="#eaa262" stroke-width="1" /><line x1="469.50" y1="357.50" x2="919.50" y2="357.50" stroke="#eaa262" stroke-width="1" /><line x1="469.50" y1="389.50" x2="919.50" y2="389.50" stroke="#eaa262" stroke-width="1" /><line x1="469.50" y1="402.00" x2="919.50" y2="402.00" stroke="#eaa262" stroke-width="1" /><line x1="469.50" y1="416.50" x2="919.50" y2="416.50" stroke="#eaa262" stroke-width="1" /><line x1="469.50" y1="452.50" x2="919.50" y2="452.50" stroke="#eaa262" stroke-width="1" /><line x1="469.50" y1="488.50" x2="919.50" y2="488.50" stroke="#eaa262" stroke-width="1" /><line x1="469.50" y1="501.50" x2="919.50" y2="501.50" stroke="#eaa262" stroke-width="1" /><line x1="469.50" y1="313.50" x2="469.50" y2="501.50" stroke="#eaa262" stroke-width="1" /><line x1="525.50" y1="313.50" x2="525.50" y2="501.50" stroke="#eaa262" stroke-width="1" /><line x1="694.50" y1="313.50" x2="694.50" y2="501.50" stroke="#eaa262" stroke-width="1" /><line x1="863.50" y1="313.50" x2="863.50" y2="501.50" stroke="#eaa262" stroke-width="1" /><line x1="919.50" y1="313.50" x2="919.50" y2="501.50" stroke="#eaa262" stroke-width="1" /><line x1="468.50" y1="402.00" x2="920.50" y2="402.00" stroke="#100000" stroke-width="7" /><line x1="469.50" y1="402.00" x2="919.50" y2="402.00" stroke="#ff8500" stroke-width="5" /><rect x="469.5" y="313.5" width="450.0" height="188.0" fill="none" stroke="#ff8500" stroke-width="2"/><line x1="469.50" y1="314.50" x2="919.50" y2="314.50" stroke="#ff8500" stroke-width="3.5" /><rect x="467.7" y="311.7" width="3.6" height="3.6" fill="#ff9a30"/><rect x="467.7" y="324.7" width="3.6" height="3.6" fill="#ff9a30"/><rect x="467.7" y="355.7" width="3.6" height="3.6" fill="#ff9a30"/><rect x="467.7" y="387.7" width="3.6" height="3.6" fill="#ff9a30"/><rect x="467.7" y="400.2" width="3.6" height="3.6" fill="#ff9a30"/><rect x="467.7" y="414.7" width="3.6" height="3.6" fill="#ff9a30"/><rect x="467.7" y="450.7" width="3.6" height="3.6" fill="#ff9a30"/><rect x="467.7" y="486.7" width="3.6" height="3.6" fill="#ff9a30"/><rect x="467.7" y="499.7" width="3.6" height="3.6" fill="#ff9a30"/><rect x="523.7" y="311.7" width="3.6" height="3.6" fill="#ff9a30"/><rect x="523.7" y="324.7" width="3.6" height="3.6" fill="#ff9a30"/><rect x="523.7" y="355.7" width="3.6" height="3.6" fill="#ff9a30"/><rect x="523.7" y="387.7" width="3.6" height="3.6" fill="#ff9a30"/><rect x="523.7" y="400.2" width="3.6" height="3.6" fill="#ff9a30"/><rect x="523.7" y="414.7" width="3.6" height="3.6" fill="#ff9a30"/><rect x="523.7" y="450.7" width="3.6" height="3.6" fill="#ff9a30"/><rect x="523.7" y="486.7" width="3.6" height="3.6" fill="#ff9a30"/><rect x="523.7" y="499.7" width="3.6" height="3.6" fill="#ff9a30"/><rect x="692.7" y="311.7" width="3.6" height="3.6" fill="#ff9a30"/><rect x="692.7" y="324.7" width="3.6" height="3.6" fill="#ff9a30"/><rect x="692.7" y="355.7" width="3.6" height="3.6" fill="#ff9a30"/><rect x="692.7" y="387.7" width="3.6" height="3.6" fill="#ff9a30"/><rect x="692.7" y="400.2" width="3.6" height="3.6" fill="#ff9a30"/><rect x="692.7" y="414.7" width="3.6" height="3.6" fill="#ff9a30"/><rect x="692.7" y="450.7" width="3.6" height="3.6" fill="#ff9a30"/><rect x="692.7" y="486.7" width="3.6" height="3.6" fill="#ff9a30"/><rect x="692.7" y="499.7" width="3.6" height="3.6" fill="#ff9a30"/><rect x="861.7" y="311.7" width="3.6" height="3.6" fill="#ff9a30"/><rect x="861.7" y="324.7" width="3.6" height="3.6" fill="#ff9a30"/><rect x="861.7" y="355.7" width="3.6" height="3.6" fill="#ff9a30"/><rect x="861.7" y="387.7" width="3.6" height="3.6" fill="#ff9a30"/><rect x="861.7" y="400.2" width="3.6" height="3.6" fill="#ff9a30"/><rect x="861.7" y="414.7" width="3.6" height="3.6" fill="#ff9a30"/><rect x="861.7" y="450.7" width="3.6" height="3.6" fill="#ff9a30"/><rect x="861.7" y="486.7" width="3.6" height="3.6" fill="#ff9a30"/><rect x="861.7" y="499.7" width="3.6" height="3.6" fill="#ff9a30"/><rect x="917.7" y="311.7" width="3.6" height="3.6" fill="#ff9a30"/><rect x="917.7" y="324.7" width="3.6" height="3.6" fill="#ff9a30"/><rect x="917.7" y="355.7" width="3.6" height="3.6" fill="#ff9a30"/><rect x="917.7" y="387.7" width="3.6" height="3.6" fill="#ff9a30"/><rect x="917.7" y="400.2" width="3.6" height="3.6" fill="#ff9a30"/><rect x="917.7" y="414.7" width="3.6" height="3.6" fill="#ff9a30"/><rect x="917.7" y="450.7" width="3.6" height="3.6" fill="#ff9a30"/><rect x="917.7" y="486.7" width="3.6" height="3.6" fill="#ff9a30"/><rect x="917.7" y="499.7" width="3.6" height="3.6" fill="#ff9a30"/><rect x="495.7" y="318.2" width="3.6" height="3.6" fill="#f29a38"/><rect x="495.7" y="340.2" width="3.6" height="3.6" fill="#f29a38"/><rect x="495.7" y="371.7" width="3.6" height="3.6" fill="#f29a38"/><rect x="495.7" y="393.9" width="3.6" height="3.6" fill="#f29a38"/><rect x="495.7" y="407.4" width="3.6" height="3.6" fill="#f29a38"/><rect x="495.7" y="432.7" width="3.6" height="3.6" fill="#f29a38"/><rect x="495.7" y="468.7" width="3.6" height="3.6" fill="#f29a38"/><rect x="495.7" y="493.2" width="3.6" height="3.6" fill="#f29a38"/><rect x="608.2" y="318.2" width="3.6" height="3.6" fill="#f29a38"/><rect x="608.2" y="340.2" width="3.6" height="3.6" fill="#f29a38"/><rect x="608.2" y="371.7" width="3.6" height="3.6" fill="#f29a38"/><rect x="608.2" y="393.9" width="3.6" height="3.6" fill="#f29a38"/><rect x="608.2" y="407.4" width="3.6" height="3.6" fill="#f29a38"/><rect x="608.2" y="432.7" width="3.6" height="3.6" fill="#f29a38"/><rect x="608.2" y="468.7" width="3.6" height="3.6" fill="#f29a38"/><rect x="608.2" y="493.2" width="3.6" height="3.6" fill="#f29a38"/><rect x="777.2" y="318.2" width="3.6" height="3.6" fill="#f29a38"/><rect x="777.2" y="340.2" width="3.6" height="3.6" fill="#f29a38"/><rect x="777.2" y="371.7" width="3.6" height="3.6" fill="#f29a38"/><rect x="777.2" y="393.9" width="3.6" height="3.6" fill="#f29a38"/><rect x="777.2" y="407.4" width="3.6" height="3.6" fill="#f29a38"/><rect x="777.2" y="432.7" width="3.6" height="3.6" fill="#f29a38"/><rect x="777.2" y="468.7" width="3.6" height="3.6" fill="#f29a38"/><rect x="777.2" y="493.2" width="3.6" height="3.6" fill="#f29a38"/><rect x="889.7" y="318.2" width="3.6" height="3.6" fill="#f29a38"/><rect x="889.7" y="340.2" width="3.6" height="3.6" fill="#f29a38"/><rect x="889.7" y="371.7" width="3.6" height="3.6" fill="#f29a38"/><rect x="889.7" y="393.9" width="3.6" height="3.6" fill="#f29a38"/><rect x="889.7" y="407.4" width="3.6" height="3.6" fill="#f29a38"/><rect x="889.7" y="432.7" width="3.6" height="3.6" fill="#f29a38"/><rect x="889.7" y="468.7" width="3.6" height="3.6" fill="#f29a38"/><rect x="889.7" y="493.2" width="3.6" height="3.6" fill="#f29a38"/><rect x="44.5" y="512.5" width="410.0" height="183.0" fill="rgba(255,133,0,0.24)"/><rect x="43.5" y="511.5" width="412.0" height="185.0" fill="none" stroke="#100000" stroke-width="3"/><line x1="43.50" y1="512.50" x2="455.50" y2="512.50" stroke="#100000" stroke-width="3" /><line x1="43.50" y1="527.50" x2="455.50" y2="527.50" stroke="#100000" stroke-width="3" /><line x1="43.50" y1="570.50" x2="455.50" y2="570.50" stroke="#100000" stroke-width="3" /><line x1="43.50" y1="621.50" x2="455.50" y2="621.50" stroke="#100000" stroke-width="3" /><line x1="43.50" y1="660.50" x2="455.50" y2="660.50" stroke="#100000" stroke-width="3" /><line x1="43.50" y1="684.50" x2="455.50" y2="684.50" stroke="#100000" stroke-width="3" /><line x1="43.50" y1="695.50" x2="455.50" y2="695.50" stroke="#100000" stroke-width="3" /><line x1="44.50" y1="511.50" x2="44.50" y2="696.50" stroke="#100000" stroke-width="3" /><line x1="96.50" y1="511.50" x2="96.50" y2="696.50" stroke="#100000" stroke-width="3" /><line x1="249.50" y1="511.50" x2="249.50" y2="696.50" stroke="#100000" stroke-width="3" /><line x1="402.50" y1="511.50" x2="402.50" y2="696.50" stroke="#100000" stroke-width="3" /><line x1="454.50" y1="511.50" x2="454.50" y2="696.50" stroke="#100000" stroke-width="3" /><line x1="44.50" y1="512.50" x2="454.50" y2="512.50" stroke="#eaa262" stroke-width="1" /><line x1="44.50" y1="527.50" x2="454.50" y2="527.50" stroke="#eaa262" stroke-width="1" /><line x1="44.50" y1="570.50" x2="454.50" y2="570.50" stroke="#eaa262" stroke-width="1" /><line x1="44.50" y1="621.50" x2="454.50" y2="621.50" stroke="#eaa262" stroke-width="1" /><line x1="44.50" y1="660.50" x2="454.50" y2="660.50" stroke="#eaa262" stroke-width="1" /><line x1="44.50" y1="684.50" x2="454.50" y2="684.50" stroke="#eaa262" stroke-width="1" /><line x1="44.50" y1="695.50" x2="454.50" y2="695.50" stroke="#eaa262" stroke-width="1" /><line x1="44.50" y1="512.50" x2="44.50" y2="695.50" stroke="#eaa262" stroke-width="1" /><line x1="96.50" y1="512.50" x2="96.50" y2="695.50" stroke="#eaa262" stroke-width="1" /><line x1="249.50" y1="512.50" x2="249.50" y2="695.50" stroke="#eaa262" stroke-width="1" /><line x1="402.50" y1="512.50" x2="402.50" y2="695.50" stroke="#eaa262" stroke-width="1" /><line x1="454.50" y1="512.50" x2="454.50" y2="695.50" stroke="#eaa262" stroke-width="1" /><rect x="44.5" y="512.5" width="410.0" height="183.0" fill="none" stroke="#ff8500" stroke-width="2"/><line x1="44.50" y1="694.50" x2="454.50" y2="694.50" stroke="#ff8500" stroke-width="3.5" /><rect x="42.7" y="510.7" width="3.6" height="3.6" fill="#ff9a30"/><rect x="42.7" y="525.7" width="3.6" height="3.6" fill="#ff9a30"/><rect x="42.7" y="568.7" width="3.6" height="3.6" fill="#ff9a30"/><rect x="42.7" y="619.7" width="3.6" height="3.6" fill="#ff9a30"/><rect x="42.7" y="658.7" width="3.6" height="3.6" fill="#ff9a30"/><rect x="42.7" y="682.7" width="3.6" height="3.6" fill="#ff9a30"/><rect x="42.7" y="693.7" width="3.6" height="3.6" fill="#ff9a30"/><rect x="94.7" y="510.7" width="3.6" height="3.6" fill="#ff9a30"/><rect x="94.7" y="525.7" width="3.6" height="3.6" fill="#ff9a30"/><rect x="94.7" y="568.7" width="3.6" height="3.6" fill="#ff9a30"/><rect x="94.7" y="619.7" width="3.6" height="3.6" fill="#ff9a30"/><rect x="94.7" y="658.7" width="3.6" height="3.6" fill="#ff9a30"/><rect x="94.7" y="682.7" width="3.6" height="3.6" fill="#ff9a30"/><rect x="94.7" y="693.7" width="3.6" height="3.6" fill="#ff9a30"/><rect x="247.7" y="510.7" width="3.6" height="3.6" fill="#ff9a30"/><rect x="247.7" y="525.7" width="3.6" height="3.6" fill="#ff9a30"/><rect x="247.7" y="568.7" width="3.6" height="3.6" fill="#ff9a30"/><rect x="247.7" y="619.7" width="3.6" height="3.6" fill="#ff9a30"/><rect x="247.7" y="658.7" width="3.6" height="3.6" fill="#ff9a30"/><rect x="247.7" y="682.7" width="3.6" height="3.6" fill="#ff9a30"/><rect x="247.7" y="693.7" width="3.6" height="3.6" fill="#ff9a30"/><rect x="400.7" y="510.7" width="3.6" height="3.6" fill="#ff9a30"/><rect x="400.7" y="525.7" width="3.6" height="3.6" fill="#ff9a30"/><rect x="400.7" y="568.7" width="3.6" height="3.6" fill="#ff9a30"/><rect x="400.7" y="619.7" width="3.6" height="3.6" fill="#ff9a30"/><rect x="400.7" y="658.7" width="3.6" height="3.6" fill="#ff9a30"/><rect x="400.7" y="682.7" width="3.6" height="3.6" fill="#ff9a30"/><rect x="400.7" y="693.7" width="3.6" height="3.6" fill="#ff9a30"/><rect x="452.7" y="510.7" width="3.6" height="3.6" fill="#ff9a30"/><rect x="452.7" y="525.7" width="3.6" height="3.6" fill="#ff9a30"/><rect x="452.7" y="568.7" width="3.6" height="3.6" fill="#ff9a30"/><rect x="452.7" y="619.7" width="3.6" height="3.6" fill="#ff9a30"/><rect x="452.7" y="658.7" width="3.6" height="3.6" fill="#ff9a30"/><rect x="452.7" y="682.7" width="3.6" height="3.6" fill="#ff9a30"/><rect x="452.7" y="693.7" width="3.6" height="3.6" fill="#ff9a30"/><rect x="68.7" y="518.2" width="3.6" height="3.6" fill="#f29a38"/><rect x="68.7" y="547.2" width="3.6" height="3.6" fill="#f29a38"/><rect x="68.7" y="594.2" width="3.6" height="3.6" fill="#f29a38"/><rect x="68.7" y="639.2" width="3.6" height="3.6" fill="#f29a38"/><rect x="68.7" y="670.7" width="3.6" height="3.6" fill="#f29a38"/><rect x="68.7" y="688.2" width="3.6" height="3.6" fill="#f29a38"/><rect x="171.2" y="518.2" width="3.6" height="3.6" fill="#f29a38"/><rect x="171.2" y="547.2" width="3.6" height="3.6" fill="#f29a38"/><rect x="171.2" y="594.2" width="3.6" height="3.6" fill="#f29a38"/><rect x="171.2" y="639.2" width="3.6" height="3.6" fill="#f29a38"/><rect x="171.2" y="670.7" width="3.6" height="3.6" fill="#f29a38"/><rect x="171.2" y="688.2" width="3.6" height="3.6" fill="#f29a38"/><rect x="324.2" y="518.2" width="3.6" height="3.6" fill="#f29a38"/><rect x="324.2" y="547.2" width="3.6" height="3.6" fill="#f29a38"/><rect x="324.2" y="594.2" width="3.6" height="3.6" fill="#f29a38"/><rect x="324.2" y="639.2" width="3.6" height="3.6" fill="#f29a38"/><rect x="324.2" y="670.7" width="3.6" height="3.6" fill="#f29a38"/><rect x="324.2" y="688.2" width="3.6" height="3.6" fill="#f29a38"/><rect x="426.7" y="518.2" width="3.6" height="3.6" fill="#f29a38"/><rect x="426.7" y="547.2" width="3.6" height="3.6" fill="#f29a38"/><rect x="426.7" y="594.2" width="3.6" height="3.6" fill="#f29a38"/><rect x="426.7" y="639.2" width="3.6" height="3.6" fill="#f29a38"/><rect x="426.7" y="670.7" width="3.6" height="3.6" fill="#f29a38"/><rect x="426.7" y="688.2" width="3.6" height="3.6" fill="#f29a38"/><rect x="479.5" y="513.5" width="411.0" height="190.0" fill="rgba(255,133,0,0.24)"/><rect x="478.5" y="512.5" width="413.0" height="192.0" fill="none" stroke="#100000" stroke-width="3"/><line x1="478.50" y1="513.50" x2="891.50" y2="513.50" stroke="#100000" stroke-width="3" /><line x1="478.50" y1="523.50" x2="891.50" y2="523.50" stroke="#100000" stroke-width="3" /><line x1="478.50" y1="548.50" x2="891.50" y2="548.50" stroke="#100000" stroke-width="3" /><line x1="478.50" y1="589.50" x2="891.50" y2="589.50" stroke="#100000" stroke-width="3" /><line x1="478.50" y1="642.50" x2="891.50" y2="642.50" stroke="#100000" stroke-width="3" /><line x1="478.50" y1="687.50" x2="891.50" y2="687.50" stroke="#100000" stroke-width="3" /><line x1="478.50" y1="703.50" x2="891.50" y2="703.50" stroke="#100000" stroke-width="3" /><line x1="479.50" y1="512.50" x2="479.50" y2="704.50" stroke="#100000" stroke-width="3" /><line x1="531.50" y1="512.50" x2="531.50" y2="704.50" stroke="#100000" stroke-width="3" /><line x1="684.50" y1="512.50" x2="684.50" y2="704.50" stroke="#100000" stroke-width="3" /><line x1="838.50" y1="512.50" x2="838.50" y2="704.50" stroke="#100000" stroke-width="3" /><line x1="890.50" y1="512.50" x2="890.50" y2="704.50" stroke="#100000" stroke-width="3" /><line x1="479.50" y1="513.50" x2="890.50" y2="513.50" stroke="#eaa262" stroke-width="1" /><line x1="479.50" y1="523.50" x2="890.50" y2="523.50" stroke="#eaa262" stroke-width="1" /><line x1="479.50" y1="548.50" x2="890.50" y2="548.50" stroke="#eaa262" stroke-width="1" /><line x1="479.50" y1="589.50" x2="890.50" y2="589.50" stroke="#eaa262" stroke-width="1" /><line x1="479.50" y1="642.50" x2="890.50" y2="642.50" stroke="#eaa262" stroke-width="1" /><line x1="479.50" y1="687.50" x2="890.50" y2="687.50" stroke="#eaa262" stroke-width="1" /><line x1="479.50" y1="703.50" x2="890.50" y2="703.50" stroke="#eaa262" stroke-width="1" /><line x1="479.50" y1="513.50" x2="479.50" y2="703.50" stroke="#eaa262" stroke-width="1" /><line x1="531.50" y1="513.50" x2="531.50" y2="703.50" stroke="#eaa262" stroke-width="1" /><line x1="684.50" y1="513.50" x2="684.50" y2="703.50" stroke="#eaa262" stroke-width="1" /><line x1="838.50" y1="513.50" x2="838.50" y2="703.50" stroke="#eaa262" stroke-width="1" /><line x1="890.50" y1="513.50" x2="890.50" y2="703.50" stroke="#eaa262" stroke-width="1" /><rect x="479.5" y="513.5" width="411.0" height="190.0" fill="none" stroke="#ff8500" stroke-width="2"/><rect x="477.7" y="511.7" width="3.6" height="3.6" fill="#ff9a30"/><rect x="477.7" y="521.7" width="3.6" height="3.6" fill="#ff9a30"/><rect x="477.7" y="546.7" width="3.6" height="3.6" fill="#ff9a30"/><rect x="477.7" y="587.7" width="3.6" height="3.6" fill="#ff9a30"/><rect x="477.7" y="640.7" width="3.6" height="3.6" fill="#ff9a30"/><rect x="477.7" y="685.7" width="3.6" height="3.6" fill="#ff9a30"/><rect x="477.7" y="701.7" width="3.6" height="3.6" fill="#ff9a30"/><rect x="529.7" y="511.7" width="3.6" height="3.6" fill="#ff9a30"/><rect x="529.7" y="521.7" width="3.6" height="3.6" fill="#ff9a30"/><rect x="529.7" y="546.7" width="3.6" height="3.6" fill="#ff9a30"/><rect x="529.7" y="587.7" width="3.6" height="3.6" fill="#ff9a30"/><rect x="529.7" y="640.7" width="3.6" height="3.6" fill="#ff9a30"/><rect x="529.7" y="685.7" width="3.6" height="3.6" fill="#ff9a30"/><rect x="529.7" y="701.7" width="3.6" height="3.6" fill="#ff9a30"/><rect x="682.7" y="511.7" width="3.6" height="3.6" fill="#ff9a30"/><rect x="682.7" y="521.7" width="3.6" height="3.6" fill="#ff9a30"/><rect x="682.7" y="546.7" width="3.6" height="3.6" fill="#ff9a30"/><rect x="682.7" y="587.7" width="3.6" height="3.6" fill="#ff9a30"/><rect x="682.7" y="640.7" width="3.6" height="3.6" fill="#ff9a30"/><rect x="682.7" y="685.7" width="3.6" height="3.6" fill="#ff9a30"/><rect x="682.7" y="701.7" width="3.6" height="3.6" fill="#ff9a30"/><rect x="836.7" y="511.7" width="3.6" height="3.6" fill="#ff9a30"/><rect x="836.7" y="521.7" width="3.6" height="3.6" fill="#ff9a30"/><rect x="836.7" y="546.7" width="3.6" height="3.6" fill="#ff9a30"/><rect x="836.7" y="587.7" width="3.6" height="3.6" fill="#ff9a30"/><rect x="836.7" y="640.7" width="3.6" height="3.6" fill="#ff9a30"/><rect x="836.7" y="685.7" width="3.6" height="3.6" fill="#ff9a30"/><rect x="836.7" y="701.7" width="3.6" height="3.6" fill="#ff9a30"/><rect x="888.7" y="511.7" width="3.6" height="3.6" fill="#ff9a30"/><rect x="888.7" y="521.7" width="3.6" height="3.6" fill="#ff9a30"/><rect x="888.7" y="546.7" width="3.6" height="3.6" fill="#ff9a30"/><rect x="888.7" y="587.7" width="3.6" height="3.6" fill="#ff9a30"/><rect x="888.7" y="640.7" width="3.6" height="3.6" fill="#ff9a30"/><rect x="888.7" y="685.7" width="3.6" height="3.6" fill="#ff9a30"/><rect x="888.7" y="701.7" width="3.6" height="3.6" fill="#ff9a30"/><rect x="503.7" y="516.7" width="3.6" height="3.6" fill="#f29a38"/><rect x="503.7" y="534.2" width="3.6" height="3.6" fill="#f29a38"/><rect x="503.7" y="567.2" width="3.6" height="3.6" fill="#f29a38"/><rect x="503.7" y="614.2" width="3.6" height="3.6" fill="#f29a38"/><rect x="503.7" y="663.2" width="3.6" height="3.6" fill="#f29a38"/><rect x="503.7" y="693.7" width="3.6" height="3.6" fill="#f29a38"/><rect x="606.2" y="516.7" width="3.6" height="3.6" fill="#f29a38"/><rect x="606.2" y="534.2" width="3.6" height="3.6" fill="#f29a38"/><rect x="606.2" y="567.2" width="3.6" height="3.6" fill="#f29a38"/><rect x="606.2" y="614.2" width="3.6" height="3.6" fill="#f29a38"/><rect x="606.2" y="663.2" width="3.6" height="3.6" fill="#f29a38"/><rect x="606.2" y="693.7" width="3.6" height="3.6" fill="#f29a38"/><rect x="759.7" y="516.7" width="3.6" height="3.6" fill="#f29a38"/><rect x="759.7" y="534.2" width="3.6" height="3.6" fill="#f29a38"/><rect x="759.7" y="567.2" width="3.6" height="3.6" fill="#f29a38"/><rect x="759.7" y="614.2" width="3.6" height="3.6" fill="#f29a38"/><rect x="759.7" y="663.2" width="3.6" height="3.6" fill="#f29a38"/><rect x="759.7" y="693.7" width="3.6" height="3.6" fill="#f29a38"/><rect x="862.7" y="516.7" width="3.6" height="3.6" fill="#f29a38"/><rect x="862.7" y="534.2" width="3.6" height="3.6" fill="#f29a38"/><rect x="862.7" y="567.2" width="3.6" height="3.6" fill="#f29a38"/><rect x="862.7" y="614.2" width="3.6" height="3.6" fill="#f29a38"/><rect x="862.7" y="663.2" width="3.6" height="3.6" fill="#f29a38"/><rect x="862.7" y="693.7" width="3.6" height="3.6" fill="#f29a38"/><rect x="42.5" y="716.5" width="414.0" height="200.0" fill="rgba(255,133,0,0.24)"/><rect x="41.5" y="715.5" width="416.0" height="202.0" fill="none" stroke="#100000" stroke-width="3"/><line x1="41.50" y1="716.50" x2="457.50" y2="716.50" stroke="#100000" stroke-width="3" /><line x1="41.50" y1="733.50" x2="457.50" y2="733.50" stroke="#100000" stroke-width="3" /><line x1="41.50" y1="780.50" x2="457.50" y2="780.50" stroke="#100000" stroke-width="3" /><line x1="41.50" y1="837.50" x2="457.50" y2="837.50" stroke="#100000" stroke-width="3" /><line x1="41.50" y1="880.50" x2="457.50" y2="880.50" stroke="#100000" stroke-width="3" /><line x1="41.50" y1="907.50" x2="457.50" y2="907.50" stroke="#100000" stroke-width="3" /><line x1="41.50" y1="916.50" x2="457.50" y2="916.50" stroke="#100000" stroke-width="3" /><line x1="42.50" y1="715.50" x2="42.50" y2="917.50" stroke="#100000" stroke-width="3" /><line x1="94.50" y1="715.50" x2="94.50" y2="917.50" stroke="#100000" stroke-width="3" /><line x1="250.50" y1="715.50" x2="250.50" y2="917.50" stroke="#100000" stroke-width="3" /><line x1="405.50" y1="715.50" x2="405.50" y2="917.50" stroke="#100000" stroke-width="3" /><line x1="456.50" y1="715.50" x2="456.50" y2="917.50" stroke="#100000" stroke-width="3" /><line x1="42.50" y1="716.50" x2="456.50" y2="716.50" stroke="#eaa262" stroke-width="1" /><line x1="42.50" y1="733.50" x2="456.50" y2="733.50" stroke="#eaa262" stroke-width="1" /><line x1="42.50" y1="780.50" x2="456.50" y2="780.50" stroke="#eaa262" stroke-width="1" /><line x1="42.50" y1="837.50" x2="456.50" y2="837.50" stroke="#eaa262" stroke-width="1" /><line x1="42.50" y1="880.50" x2="456.50" y2="880.50" stroke="#eaa262" stroke-width="1" /><line x1="42.50" y1="907.50" x2="456.50" y2="907.50" stroke="#eaa262" stroke-width="1" /><line x1="42.50" y1="916.50" x2="456.50" y2="916.50" stroke="#eaa262" stroke-width="1" /><line x1="42.50" y1="716.50" x2="42.50" y2="916.50" stroke="#eaa262" stroke-width="1" /><line x1="94.50" y1="716.50" x2="94.50" y2="916.50" stroke="#eaa262" stroke-width="1" /><line x1="250.50" y1="716.50" x2="250.50" y2="916.50" stroke="#eaa262" stroke-width="1" /><line x1="405.50" y1="716.50" x2="405.50" y2="916.50" stroke="#eaa262" stroke-width="1" /><line x1="456.50" y1="716.50" x2="456.50" y2="916.50" stroke="#eaa262" stroke-width="1" /><rect x="42.5" y="716.5" width="414.0" height="200.0" fill="none" stroke="#ff8500" stroke-width="2"/><line x1="42.50" y1="717.50" x2="456.50" y2="717.50" stroke="#ff8500" stroke-width="3.5" /><line x1="42.50" y1="915.50" x2="456.50" y2="915.50" stroke="#ff8500" stroke-width="3.5" /><rect x="40.7" y="714.7" width="3.6" height="3.6" fill="#ff9a30"/><rect x="40.7" y="731.7" width="3.6" height="3.6" fill="#ff9a30"/><rect x="40.7" y="778.7" width="3.6" height="3.6" fill="#ff9a30"/><rect x="40.7" y="835.7" width="3.6" height="3.6" fill="#ff9a30"/><rect x="40.7" y="878.7" width="3.6" height="3.6" fill="#ff9a30"/><rect x="40.7" y="905.7" width="3.6" height="3.6" fill="#ff9a30"/><rect x="40.7" y="914.7" width="3.6" height="3.6" fill="#ff9a30"/><rect x="92.7" y="714.7" width="3.6" height="3.6" fill="#ff9a30"/><rect x="92.7" y="731.7" width="3.6" height="3.6" fill="#ff9a30"/><rect x="92.7" y="778.7" width="3.6" height="3.6" fill="#ff9a30"/><rect x="92.7" y="835.7" width="3.6" height="3.6" fill="#ff9a30"/><rect x="92.7" y="878.7" width="3.6" height="3.6" fill="#ff9a30"/><rect x="92.7" y="905.7" width="3.6" height="3.6" fill="#ff9a30"/><rect x="92.7" y="914.7" width="3.6" height="3.6" fill="#ff9a30"/><rect x="248.7" y="714.7" width="3.6" height="3.6" fill="#ff9a30"/><rect x="248.7" y="731.7" width="3.6" height="3.6" fill="#ff9a30"/><rect x="248.7" y="778.7" width="3.6" height="3.6" fill="#ff9a30"/><rect x="248.7" y="835.7" width="3.6" height="3.6" fill="#ff9a30"/><rect x="248.7" y="878.7" width="3.6" height="3.6" fill="#ff9a30"/><rect x="248.7" y="905.7" width="3.6" height="3.6" fill="#ff9a30"/><rect x="248.7" y="914.7" width="3.6" height="3.6" fill="#ff9a30"/><rect x="403.7" y="714.7" width="3.6" height="3.6" fill="#ff9a30"/><rect x="403.7" y="731.7" width="3.6" height="3.6" fill="#ff9a30"/><rect x="403.7" y="778.7" width="3.6" height="3.6" fill="#ff9a30"/><rect x="403.7" y="835.7" width="3.6" height="3.6" fill="#ff9a30"/><rect x="403.7" y="878.7" width="3.6" height="3.6" fill="#ff9a30"/><rect x="403.7" y="905.7" width="3.6" height="3.6" fill="#ff9a30"/><rect x="403.7" y="914.7" width="3.6" height="3.6" fill="#ff9a30"/><rect x="454.7" y="714.7" width="3.6" height="3.6" fill="#ff9a30"/><rect x="454.7" y="731.7" width="3.6" height="3.6" fill="#ff9a30"/><rect x="454.7" y="778.7" width="3.6" height="3.6" fill="#ff9a30"/><rect x="454.7" y="835.7" width="3.6" height="3.6" fill="#ff9a30"/><rect x="454.7" y="878.7" width="3.6" height="3.6" fill="#ff9a30"/><rect x="454.7" y="905.7" width="3.6" height="3.6" fill="#ff9a30"/><rect x="454.7" y="914.7" width="3.6" height="3.6" fill="#ff9a30"/><rect x="66.7" y="723.2" width="3.6" height="3.6" fill="#f29a38"/><rect x="66.7" y="755.2" width="3.6" height="3.6" fill="#f29a38"/><rect x="66.7" y="807.2" width="3.6" height="3.6" fill="#f29a38"/><rect x="66.7" y="857.2" width="3.6" height="3.6" fill="#f29a38"/><rect x="66.7" y="892.2" width="3.6" height="3.6" fill="#f29a38"/><rect x="66.7" y="910.2" width="3.6" height="3.6" fill="#f29a38"/><rect x="170.7" y="723.2" width="3.6" height="3.6" fill="#f29a38"/><rect x="170.7" y="755.2" width="3.6" height="3.6" fill="#f29a38"/><rect x="170.7" y="807.2" width="3.6" height="3.6" fill="#f29a38"/><rect x="170.7" y="857.2" width="3.6" height="3.6" fill="#f29a38"/><rect x="170.7" y="892.2" width="3.6" height="3.6" fill="#f29a38"/><rect x="170.7" y="910.2" width="3.6" height="3.6" fill="#f29a38"/><rect x="326.2" y="723.2" width="3.6" height="3.6" fill="#f29a38"/><rect x="326.2" y="755.2" width="3.6" height="3.6" fill="#f29a38"/><rect x="326.2" y="807.2" width="3.6" height="3.6" fill="#f29a38"/><rect x="326.2" y="857.2" width="3.6" height="3.6" fill="#f29a38"/><rect x="326.2" y="892.2" width="3.6" height="3.6" fill="#f29a38"/><rect x="326.2" y="910.2" width="3.6" height="3.6" fill="#f29a38"/><rect x="429.2" y="723.2" width="3.6" height="3.6" fill="#f29a38"/><rect x="429.2" y="755.2" width="3.6" height="3.6" fill="#f29a38"/><rect x="429.2" y="807.2" width="3.6" height="3.6" fill="#f29a38"/><rect x="429.2" y="857.2" width="3.6" height="3.6" fill="#f29a38"/><rect x="429.2" y="892.2" width="3.6" height="3.6" fill="#f29a38"/><rect x="429.2" y="910.2" width="3.6" height="3.6" fill="#f29a38"/><rect x="475.5" y="716.5" width="416.0" height="196.0" fill="rgba(255,133,0,0.24)"/><rect x="474.5" y="715.5" width="418.0" height="198.0" fill="none" stroke="#100000" stroke-width="3"/><line x1="474.50" y1="716.50" x2="892.50" y2="716.50" stroke="#100000" stroke-width="3" /><line x1="474.50" y1="731.50" x2="892.50" y2="731.50" stroke="#100000" stroke-width="3" /><line x1="474.50" y1="757.50" x2="892.50" y2="757.50" stroke="#100000" stroke-width="3" /><line x1="474.50" y1="797.50" x2="892.50" y2="797.50" stroke="#100000" stroke-width="3" /><line x1="474.50" y1="851.50" x2="892.50" y2="851.50" stroke="#100000" stroke-width="3" /><line x1="474.50" y1="896.50" x2="892.50" y2="896.50" stroke="#100000" stroke-width="3" /><line x1="474.50" y1="912.50" x2="892.50" y2="912.50" stroke="#100000" stroke-width="3" /><line x1="475.50" y1="715.50" x2="475.50" y2="913.50" stroke="#100000" stroke-width="3" /><line x1="527.50" y1="715.50" x2="527.50" y2="913.50" stroke="#100000" stroke-width="3" /><line x1="683.50" y1="715.50" x2="683.50" y2="913.50" stroke="#100000" stroke-width="3" /><line x1="839.50" y1="715.50" x2="839.50" y2="913.50" stroke="#100000" stroke-width="3" /><line x1="891.50" y1="715.50" x2="891.50" y2="913.50" stroke="#100000" stroke-width="3" /><line x1="475.50" y1="716.50" x2="891.50" y2="716.50" stroke="#eaa262" stroke-width="1" /><line x1="475.50" y1="731.50" x2="891.50" y2="731.50" stroke="#eaa262" stroke-width="1" /><line x1="475.50" y1="757.50" x2="891.50" y2="757.50" stroke="#eaa262" stroke-width="1" /><line x1="475.50" y1="797.50" x2="891.50" y2="797.50" stroke="#eaa262" stroke-width="1" /><line x1="475.50" y1="851.50" x2="891.50" y2="851.50" stroke="#eaa262" stroke-width="1" /><line x1="475.50" y1="896.50" x2="891.50" y2="896.50" stroke="#eaa262" stroke-width="1" /><line x1="475.50" y1="912.50" x2="891.50" y2="912.50" stroke="#eaa262" stroke-width="1" /><line x1="475.50" y1="716.50" x2="475.50" y2="912.50" stroke="#eaa262" stroke-width="1" /><line x1="527.50" y1="716.50" x2="527.50" y2="912.50" stroke="#eaa262" stroke-width="1" /><line x1="683.50" y1="716.50" x2="683.50" y2="912.50" stroke="#eaa262" stroke-width="1" /><line x1="839.50" y1="716.50" x2="839.50" y2="912.50" stroke="#eaa262" stroke-width="1" /><line x1="891.50" y1="716.50" x2="891.50" y2="912.50" stroke="#eaa262" stroke-width="1" /><line x1="474.50" y1="719.50" x2="892.50" y2="719.50" stroke="#100000" stroke-width="7" /><line x1="475.50" y1="719.50" x2="891.50" y2="719.50" stroke="#ff8500" stroke-width="5" /><rect x="475.5" y="716.5" width="416.0" height="196.0" fill="none" stroke="#ff8500" stroke-width="2"/><rect x="473.7" y="714.7" width="3.6" height="3.6" fill="#ff9a30"/><rect x="473.7" y="729.7" width="3.6" height="3.6" fill="#ff9a30"/><rect x="473.7" y="755.7" width="3.6" height="3.6" fill="#ff9a30"/><rect x="473.7" y="795.7" width="3.6" height="3.6" fill="#ff9a30"/><rect x="473.7" y="849.7" width="3.6" height="3.6" fill="#ff9a30"/><rect x="473.7" y="894.7" width="3.6" height="3.6" fill="#ff9a30"/><rect x="473.7" y="910.7" width="3.6" height="3.6" fill="#ff9a30"/><rect x="525.7" y="714.7" width="3.6" height="3.6" fill="#ff9a30"/><rect x="525.7" y="729.7" width="3.6" height="3.6" fill="#ff9a30"/><rect x="525.7" y="755.7" width="3.6" height="3.6" fill="#ff9a30"/><rect x="525.7" y="795.7" width="3.6" height="3.6" fill="#ff9a30"/><rect x="525.7" y="849.7" width="3.6" height="3.6" fill="#ff9a30"/><rect x="525.7" y="894.7" width="3.6" height="3.6" fill="#ff9a30"/><rect x="525.7" y="910.7" width="3.6" height="3.6" fill="#ff9a30"/><rect x="681.7" y="714.7" width="3.6" height="3.6" fill="#ff9a30"/><rect x="681.7" y="729.7" width="3.6" height="3.6" fill="#ff9a30"/><rect x="681.7" y="755.7" width="3.6" height="3.6" fill="#ff9a30"/><rect x="681.7" y="795.7" width="3.6" height="3.6" fill="#ff9a30"/><rect x="681.7" y="849.7" width="3.6" height="3.6" fill="#ff9a30"/><rect x="681.7" y="894.7" width="3.6" height="3.6" fill="#ff9a30"/><rect x="681.7" y="910.7" width="3.6" height="3.6" fill="#ff9a30"/><rect x="837.7" y="714.7" width="3.6" height="3.6" fill="#ff9a30"/><rect x="837.7" y="729.7" width="3.6" height="3.6" fill="#ff9a30"/><rect x="837.7" y="755.7" width="3.6" height="3.6" fill="#ff9a30"/><rect x="837.7" y="795.7" width="3.6" height="3.6" fill="#ff9a30"/><rect x="837.7" y="849.7" width="3.6" height="3.6" fill="#ff9a30"/><rect x="837.7" y="894.7" width="3.6" height="3.6" fill="#ff9a30"/><rect x="837.7" y="910.7" width="3.6" height="3.6" fill="#ff9a30"/><rect x="889.7" y="714.7" width="3.6" height="3.6" fill="#ff9a30"/><rect x="889.7" y="729.7" width="3.6" height="3.6" fill="#ff9a30"/><rect x="889.7" y="755.7" width="3.6" height="3.6" fill="#ff9a30"/><rect x="889.7" y="795.7" width="3.6" height="3.6" fill="#ff9a30"/><rect x="889.7" y="849.7" width="3.6" height="3.6" fill="#ff9a30"/><rect x="889.7" y="894.7" width="3.6" height="3.6" fill="#ff9a30"/><rect x="889.7" y="910.7" width="3.6" height="3.6" fill="#ff9a30"/><rect x="499.7" y="722.2" width="3.6" height="3.6" fill="#f29a38"/><rect x="499.7" y="742.7" width="3.6" height="3.6" fill="#f29a38"/><rect x="499.7" y="775.7" width="3.6" height="3.6" fill="#f29a38"/><rect x="499.7" y="822.7" width="3.6" height="3.6" fill="#f29a38"/><rect x="499.7" y="872.2" width="3.6" height="3.6" fill="#f29a38"/><rect x="499.7" y="902.7" width="3.6" height="3.6" fill="#f29a38"/><rect x="603.7" y="722.2" width="3.6" height="3.6" fill="#f29a38"/><rect x="603.7" y="742.7" width="3.6" height="3.6" fill="#f29a38"/><rect x="603.7" y="775.7" width="3.6" height="3.6" fill="#f29a38"/><rect x="603.7" y="822.7" width="3.6" height="3.6" fill="#f29a38"/><rect x="603.7" y="872.2" width="3.6" height="3.6" fill="#f29a38"/><rect x="603.7" y="902.7" width="3.6" height="3.6" fill="#f29a38"/><rect x="759.7" y="722.2" width="3.6" height="3.6" fill="#f29a38"/><rect x="759.7" y="742.7" width="3.6" height="3.6" fill="#f29a38"/><rect x="759.7" y="775.7" width="3.6" height="3.6" fill="#f29a38"/><rect x="759.7" y="822.7" width="3.6" height="3.6" fill="#f29a38"/><rect x="759.7" y="872.2" width="3.6" height="3.6" fill="#f29a38"/><rect x="759.7" y="902.7" width="3.6" height="3.6" fill="#f29a38"/><rect x="863.7" y="722.2" width="3.6" height="3.6" fill="#f29a38"/><rect x="863.7" y="742.7" width="3.6" height="3.6" fill="#f29a38"/><rect x="863.7" y="775.7" width="3.6" height="3.6" fill="#f29a38"/><rect x="863.7" y="822.7" width="3.6" height="3.6" fill="#f29a38"/><rect x="863.7" y="872.2" width="3.6" height="3.6" fill="#f29a38"/><rect x="863.7" y="902.7" width="3.6" height="3.6" fill="#f29a38"/><path d="M771.5,807.5 L787.5,823.5 L771.5,839.5 L755.5,823.5 Z" fill="none" stroke="#ffffff" stroke-width="1.2" stroke-dasharray="4,4"/><path d="M771.5,807.5 L787.5,823.5 L771.5,839.5 L755.5,823.5 Z" fill="none" stroke="#d04030" stroke-width="1.2" stroke-dasharray="4,4" stroke-dashoffset="4"/><path d="M739,823.5 H765 M778,823.5 H804 M771.5,791 V817 M771.5,830 V856" stroke="#ffffff" stroke-width="1" stroke-dasharray="1,1"/><line x1="977.00" y1="165.00" x2="1920.00" y2="160.00" stroke="#505050" stroke-width="1" /><line x1="977.00" y1="176.00" x2="1920.00" y2="170.00" stroke="#505050" stroke-width="1" /><line x1="977.00" y1="199.00" x2="1920.00" y2="181.00" stroke="#505050" stroke-width="1" /><line x1="977.00" y1="205.00" x2="1920.00" y2="206.00" stroke="#505050" stroke-width="1" /><line x1="977.00" y1="261.00" x2="1920.00" y2="176.00" stroke="#505050" stroke-width="1" /><line x1="977.00" y1="206.00" x2="1920.00" y2="272.50" stroke="#505050" stroke-width="1" /><line x1="1226.00" y1="162.50" x2="1920.00" y2="168.50" stroke="#505050" stroke-width="1" /><line x1="977.00" y1="643.00" x2="1740.00" y2="1008.00" stroke="#3c7c3c" stroke-width="1.3" /><line x1="1206.00" y1="1008.00" x2="1920.00" y2="507.00" stroke="#723838" stroke-width="1.6" /><polygon points="1254.0,402.0 1141.0,718.0 1272.0,756.0 1423.0,856.0" fill="#c4936a"/><polygon points="1141.0,718.0 1342.0,631.0 1369.0,707.0 1272.0,756.0" fill="#a88f7c"/><line x1="1243.00" y1="434.00" x2="1264.00" y2="428.00" stroke="#ffa52a" stroke-width="1.8" /><line x1="1211.80" y1="517.70" x2="1287.10" y2="494.80" stroke="#ffa52a" stroke-width="1.8" /><line x1="1181.70" y1="606.10" x2="1311.70" y2="558.60" stroke="#ffa52a" stroke-width="1.8" /><line x1="1159.50" y1="668.30" x2="1331.30" y2="612.60" stroke="#ffa52a" stroke-width="1.8" /><line x1="1150.00" y1="695.00" x2="1335.00" y2="621.00" stroke="#ffa52a" stroke-width="1.8" /><line x1="1295.30" y1="516.00" x2="1231.50" y2="678.10" stroke="#ffa52a" stroke-width="1.8" /><line x1="1231.50" y1="678.10" x2="1160.00" y2="705.00" stroke="#ffa52a" stroke-width="1.8" /><line x1="1180.00" y1="714.70" x2="1345.00" y2="640.50" stroke="#ffa52a" stroke-width="1.8" /><line x1="1207.50" y1="733.70" x2="1353.70" y2="666.00" stroke="#ffa52a" stroke-width="1.8" /><line x1="1254.00" y1="748.60" x2="1362.00" y2="693.50" stroke="#ffa52a" stroke-width="1.8" /><line x1="1232.00" y1="679.00" x2="1364.00" y2="706.00" stroke="#ffa52a" stroke-width="1.8" /><line x1="1296.16" y1="772.00" x2="1376.61" y2="731.37" stroke="#ffa52a" stroke-width="1.8" /><line x1="1335.42" y1="798.00" x2="1390.97" y2="769.95" stroke="#ffa52a" stroke-width="1.8" /><line x1="1377.70" y1="826.00" x2="1406.43" y2="811.49" stroke="#ffa52a" stroke-width="1.8" /><line x1="1141.00" y1="718.00" x2="1342.00" y2="631.00" stroke="#ff9a20" stroke-width="2" /><line x1="1141.00" y1="718.00" x2="1342.00" y2="631.00" stroke="#c03018" stroke-width="1" stroke-dasharray="1.5,1.5"/><line x1="1272.00" y1="756.00" x2="1369.00" y2="707.00" stroke="#ffa010" stroke-width="5" /><polygon points="1254.0,402.0 1758.0,288.0 1855.0,552.0 1423.0,856.0" fill="#ad7b4f"/><polygon points="1388.2,762.5 1835.0,497.6 1855.0,552.0 1423.0,856.0" fill="#c08042"/><line x1="1268.37" y1="440.59" x2="1766.24" y2="310.44" stroke="#ffa52a" stroke-width="1.8" /><line x1="1307.23" y1="545.01" x2="1788.56" y2="371.16" stroke="#ffa52a" stroke-width="1.8" /><line x1="1354.56" y1="672.13" x2="1815.71" y2="445.08" stroke="#ffa52a" stroke-width="1.8" /><line x1="1388.19" y1="762.48" x2="1835.02" y2="497.62" stroke="#ffa52a" stroke-width="2.6" /><line x1="1390.72" y1="769.29" x2="1836.47" y2="501.58" stroke="#ffa52a" stroke-width="1.8" /><line x1="1401.20" y1="797.43" x2="1842.49" y2="517.94" stroke="#ffa52a" stroke-width="1.2" /><line x1="1410.49" y1="822.40" x2="1847.82" y2="532.46" stroke="#ffa52a" stroke-width="2" /><line x1="1415.56" y1="836.02" x2="1850.73" y2="540.38" stroke="#ffa52a" stroke-width="1.2" /><line x1="1353.79" y1="379.43" x2="1510.26" y2="794.59" stroke="#ffa52a" stroke-width="1.8" /><line x1="1574.04" y1="329.61" x2="1695.16" y2="664.48" stroke="#ffa52a" stroke-width="1.8" /><line x1="1720.20" y1="296.55" x2="1820.01" y2="576.62" stroke="#ffa52a" stroke-width="1.8" /><line x1="1254.00" y1="402.00" x2="1758.00" y2="288.00" stroke="#ff9a1a" stroke-width="4" /><line x1="1758.00" y1="288.00" x2="1855.00" y2="552.00" stroke="#ff9a1a" stroke-width="2" /><line x1="1758.00" y1="288.00" x2="1855.00" y2="552.00" stroke="#c03018" stroke-width="1" stroke-dasharray="1.5,1.5"/><line x1="1254.00" y1="402.00" x2="1141.00" y2="718.00" stroke="#ff9a1a" stroke-width="2.5" /><line x1="1141.00" y1="718.00" x2="1272.00" y2="756.00" stroke="#ff9a1a" stroke-width="2" /><line x1="1272.00" y1="756.00" x2="1423.00" y2="856.00" stroke="#ff9a1a" stroke-width="2" /><polygon points="1417.9,842.4 1852.1,544.1 1856.0,554.0 1423.0,858.0" fill="#ffa010"/><line x1="1254.00" y1="402.00" x2="1423.00" y2="856.00" stroke="#ff9a20" stroke-width="2" /><line x1="1254.00" y1="402.00" x2="1423.00" y2="856.00" stroke="#c03018" stroke-width="1.2" stroke-dasharray="1.5,1.5"/><rect x="1420" y="853" width="6" height="6" fill="#ffcc99" stroke="#000" stroke-width="1"/><circle cx="1594" cy="565" r="15" fill="none" stroke="#ffffff" stroke-width="1.3"/><line x1="1596.00" y1="550.00" x2="1597.00" y2="500.00" stroke="#0000ff" stroke-width="2" /><polygon points="1591,505 1597,486 1603,505" fill="#0000ff"/><line x1="1580.00" y1="560.00" x2="1540.00" y2="551.00" stroke="#00cc00" stroke-width="2" /><polygon points="1545,545 1528,549 1543,556" fill="#00dd00"/><line x1="1605.00" y1="562.00" x2="1628.00" y2="551.00" stroke="#cc0000" stroke-width="1.5" /><polygon points="1622,545 1637,545 1628,556" fill="#ee0000"/><circle cx="1574.3" cy="828.3" r="12.5" fill="none" stroke="#ffffff" stroke-width="1.3" stroke-dasharray="4.9,4.9"/><circle cx="1574.3" cy="828.3" r="12.5" fill="none" stroke="#c02040" stroke-width="1.3" stroke-dasharray="4.9,4.9" stroke-dashoffset="4.9"/><path d="M1549,828.3 H1567 M1580,828.3 H1600 M1574.3,803 V823 M1574.3,836 V854" stroke="#000" stroke-width="1.2"/><g transform="translate(12,10.5) scale(0.85)"><path d="M-2.5,-7.5 L2.5,-3 M-9,-4 L-1,-2.5 M-10.5,3 L-3.5,-0.5" stroke="#ee8a2c" stroke-width="3.6" stroke-linecap="round"/><circle cx="0" cy="0" r="5.6" fill="#ee8a2c"/><circle cx="0" cy="0" r="3.3" fill="#ffffff"/><circle cx="0" cy="0" r="2.1" fill="#1d4f9a"/></g><text x="23" y="16" font-size="12" fill="#000" letter-spacing="-0.035">Blender* [C:\Users\franc\Desktop\table_tent_template_7\table_tent_template_7.blend]</text><rect x="1799" y="10" width="10" height="1" fill="#000" /><rect x="1844.5" y="7.5" width="7" height="7" fill="none" stroke="#000" stroke-width="1"/><path d="M1846.5,7.5 V5.5 H1853.5 V12.5 H1851.5" fill="none" stroke="#000" stroke-width="1"/><line x1="1890.00" y1="5.00" x2="1900.00" y2="15.00" stroke="#000" stroke-width="1.1" /><line x1="1900.00" y1="5.00" x2="1890.00" y2="15.00" stroke="#000" stroke-width="1.1" /><path d="M15.5,29.5 L45.5,29.5 Q49.5,29.5 49.5,33.5 L49.5,48.5 Q49.5,52.5 45.5,52.5 L15.5,52.5 Q11.5,52.5 11.5,48.5 L11.5,33.5 Q11.5,29.5 15.5,29.5 Z" fill="url(#gMenu)" stroke="#262626" stroke-width="1"/><circle cx="26" cy="41" r="8" fill="#3c5a9c" stroke="#101828" stroke-width="1.2"/><circle cx="26" cy="41" r="6.5" fill="none" stroke="#8ea6d6" stroke-width="1"/><rect x="24.6" y="39" width="3" height="6.5" fill="#fff"/><circle cx="26" cy="36" r="1.6" fill="#fff"/><rect x="23.5" y="44.5" width="5" height="1.5" fill="#fff"/><polygon points="39,39 43,34 47,39" fill="#d0d0d0"/><polygon points="39,43 43,48 47,43" fill="#d0d0d0"/><text x="67" y="48" font-size="14" fill="#000" >File</text><text x="112.5" y="48" font-size="14" fill="#000" >Render</text><text x="184" y="48" font-size="14" fill="#000" >Window</text><text x="259.5" y="48" font-size="14" fill="#000" >Help</text><path d="M308.5,29.5 L343.5,29.5 Q343.5,29.5 343.5,29.5 L343.5,52.5 Q343.5,52.5 343.5,52.5 L308.5,52.5 Q304.5,52.5 304.5,48.5 L304.5,33.5 Q304.5,29.5 308.5,29.5 Z" fill="url(#gMenu)" stroke="#262626" stroke-width="1"/><rect x="313" y="33" width="8" height="8" fill="#ddd"/><rect x="313" y="42" width="8" height="8" fill="#eee"/><rect x="322" y="33" width="8" height="17" fill="#ddd"/><polygon points="333,39 337,34 341,39" fill="#d0d0d0"/><polygon points="333,43 337,48 341,43" fill="#d0d0d0"/><path d="M343.5,29.5 L493.5,29.5 Q493.5,29.5 493.5,29.5 L493.5,52.5 Q493.5,52.5 493.5,52.5 L343.5,52.5 Q343.5,52.5 343.5,52.5 L343.5,29.5 Q343.5,29.5 343.5,29.5 Z" fill="url(#gText)" stroke="#262626" stroke-width="1"/><text x="353" y="48" font-size="14" fill="#000" >UV Editing</text><path d="M493.5,29.5 L518.5,29.5 Q518.5,29.5 518.5,29.5 L518.5,52.5 Q518.5,52.5 518.5,52.5 L493.5,52.5 Q493.5,52.5 493.5,52.5 L493.5,29.5 Q493.5,29.5 493.5,29.5 Z" fill="url(#gTool)" stroke="#262626" stroke-width="1"/><path d="M518.5,29.5 L539.5,29.5 Q543.5,29.5 543.5,33.5 L543.5,48.5 Q543.5,52.5 539.5,52.5 L518.5,52.5 Q518.5,52.5 518.5,52.5 L518.5,29.5 Q518.5,29.5 518.5,29.5 Z" fill="url(#gTool)" stroke="#262626" stroke-width="1"/><path d="M505.5,35 V47 M499.5,41 H511.5" stroke="#000" stroke-width="4"/><path d="M505.5,35.5 V46.5 M500,41 H511" stroke="#fff" stroke-width="2"/><path d="M526,36 L536,46 M536,36 L526,46" stroke="#000" stroke-width="4"/><path d="M526.5,36.5 L535.5,45.5 M535.5,36.5 L526.5,45.5" stroke="#fff" stroke-width="2"/><path d="M554.5,29.5 L590.5,29.5 Q590.5,29.5 590.5,29.5 L590.5,52.5 Q590.5,52.5 590.5,52.5 L554.5,52.5 Q550.5,52.5 550.5,48.5 L550.5,33.5 Q550.5,29.5 554.5,29.5 Z" fill="url(#gMenu)" stroke="#262626" stroke-width="1"/><circle cx="559" cy="35" r="2.5" fill="#e0e060"/><rect x="565" y="34" width="7" height="12" rx="3" fill="#6a8ad0" stroke="#101830" stroke-width="1"/><circle cx="563" cy="45" r="3.8" fill="#e0e0e0" stroke="#000" stroke-width="1"/><polygon points="578,39 582,34 586,39" fill="#d0d0d0"/><polygon points="578,43 582,48 586,43" fill="#d0d0d0"/><path d="M590.5,29.5 L739.5,29.5 Q739.5,29.5 739.5,29.5 L739.5,52.5 Q739.5,52.5 739.5,52.5 L590.5,52.5 Q590.5,52.5 590.5,52.5 L590.5,29.5 Q590.5,29.5 590.5,29.5 Z" fill="url(#gText)" stroke="#262626" stroke-width="1"/><text x="599" y="48" font-size="14" fill="#000" >Scene</text><path d="M739.5,29.5 L764.5,29.5 Q764.5,29.5 764.5,29.5 L764.5,52.5 Q764.5,52.5 764.5,52.5 L739.5,52.5 Q739.5,52.5 739.5,52.5 L739.5,29.5 Q739.5,29.5 739.5,29.5 Z" fill="url(#gTool)" stroke="#262626" stroke-width="1"/><path d="M764.5,29.5 L785.5,29.5 Q789.5,29.5 789.5,33.5 L789.5,48.5 Q789.5,52.5 785.5,52.5 L764.5,52.5 Q764.5,52.5 764.5,52.5 L764.5,29.5 Q764.5,29.5 764.5,29.5 Z" fill="url(#gTool)" stroke="#262626" stroke-width="1"/><path d="M751.5,35 V47 M745.5,41 H757.5" stroke="#000" stroke-width="4"/><path d="M751.5,35.5 V46.5 M746,41 H757" stroke="#fff" stroke-width="2"/><path d="M772,36 L782,46 M782,36 L772,46" stroke="#000" stroke-width="4"/><path d="M772.5,36.5 L781.5,45.5 M781.5,36.5 L772.5,45.5" stroke="#fff" stroke-width="2"/><path d="M813.5,29.5 L946.5,29.5 Q950.5,29.5 950.5,33.5 L950.5,48.5 Q950.5,52.5 946.5,52.5 L813.5,52.5 Q809.5,52.5 809.5,48.5 L809.5,33.5 Q809.5,29.5 813.5,29.5 Z" fill="url(#gMenu)" stroke="#262626" stroke-width="1"/><text x="819" y="48" font-size="14" fill="#fff" >Cycles Render</text><polygon points="938,39 942,34 946,39" fill="#d0d0d0"/><polygon points="938,43 942,48 946,43" fill="#d0d0d0"/><g transform="translate(985,42.5) scale(1.0)"><path d="M-2,-8.3 L2.5,-3.5 M-9,-4.6 L-1,-3 M-10.8,3.7 L-3.5,-1" stroke="#2a1a08" stroke-width="3.6" stroke-linecap="round"/><circle cx="0" cy="0" r="5.8" fill="#2a1a08"/><path d="M-2,-8.3 L2.5,-3.5 M-9,-4.6 L-1,-3 M-10.8,3.7 L-3.5,-1" stroke="#f0b070" stroke-width="2" stroke-linecap="round"/><circle cx="0" cy="0" r="4.9" fill="#e8902e"/><circle cx="0" cy="0" r="3.5" fill="#fff8e0"/><circle cx="0" cy="0" r="2.2" fill="#2a50b0"/></g><text x="1005.5" y="48" font-size="14" fill="#000" letter-spacing="0.19">v2.79 | Verts:1,722/1,722 | Edges:3,440/3,440 | Faces:1,720/1,720 | Tris:3,440 | Mem:13.99M | table_tent_template_7</text><path d="M15.5,1012.5 L46.5,1012.5 Q50.5,1012.5 50.5,1016.5 L50.5,1031.5 Q50.5,1035.5 46.5,1035.5 L15.5,1035.5 Q11.5,1035.5 11.5,1031.5 L11.5,1016.5 Q11.5,1012.5 15.5,1012.5 Z" fill="url(#gMenu)" stroke="#262626" stroke-width="1"/><rect x="16" y="1017" width="19" height="15" fill="#f0e8e8" stroke="#111" stroke-width="1"/><rect x="17" y="1018" width="17" height="5" fill="#e08888"/><rect x="17" y="1023" width="17" height="5" fill="#30305a"/><polygon points="39,1022 43,1017 47,1022" fill="#d0d0d0"/><polygon points="39,1026 43,1031 47,1026" fill="#d0d0d0"/><text x="66" y="1031" font-size="14" fill="#000" >View</text><text x="122" y="1031" font-size="14" fill="#000" >Select</text><text x="186" y="1031" font-size="14" fill="#000" >Image</text><text x="252" y="1031" font-size="14" fill="#000" >UVs</text><path d="M298.5,1012.5 L333.5,1012.5 Q333.5,1012.5 333.5,1012.5 L333.5,1035.5 Q333.5,1035.5 333.5,1035.5 L298.5,1035.5 Q294.5,1035.5 294.5,1031.5 L294.5,1016.5 Q294.5,1012.5 298.5,1012.5 Z" fill="url(#gMenu)" stroke="#262626" stroke-width="1"/><path d="M301.5,1016.5 h10 l4,4 v11.5 h-14 z" fill="#f0ecec" stroke="#1a1a1a" stroke-width="1"/><rect x="302.5" y="1017.5" width="11" height="6" fill="#e6aaa8"/><circle cx="310" cy="1020" r="1.4" fill="#fff"/><path d="M302,1024 q3,-2.5 6,0 t6,-0.5 v2.5 h-12 z" fill="#2a1a2a"/><rect x="302.5" y="1026" width="12" height="5.5" fill="#8e90d0"/><polygon points="322,1022 326,1017 330,1022" fill="#d0d0d0"/><polygon points="322,1026 326,1031 330,1026" fill="#d0d0d0"/><path d="M333.5,1012.5 L408.5,1012.5 Q408.5,1012.5 408.5,1012.5 L408.5,1035.5 Q408.5,1035.5 408.5,1035.5 L333.5,1035.5 Q333.5,1035.5 333.5,1035.5 L333.5,1012.5 Q333.5,1012.5 333.5,1012.5 Z" fill="url(#gTool)" stroke="#262626" stroke-width="1"/><path d="M347.5,1018 V1030 M341.5,1024 H353.5" stroke="#000" stroke-width="4"/><path d="M347.5,1018.5 V1029.5 M342,1024 H353" stroke="#fff" stroke-width="2"/><text x="365" y="1031" font-size="14" fill="#000" >New</text><path d="M408.5,1012.5 L479.5,1012.5 Q483.5,1012.5 483.5,1016.5 L483.5,1031.5 Q483.5,1035.5 479.5,1035.5 L408.5,1035.5 Q408.5,1035.5 408.5,1035.5 L408.5,1012.5 Q408.5,1012.5 408.5,1012.5 Z" fill="url(#gTool)" stroke="#262626" stroke-width="1"/><path d="M413.5,1018.5 h5 l2,2 h10 v11 h-17 z" fill="#e8dca8" stroke="#222" stroke-width="1"/><rect x="420.5" y="1015.5" width="8" height="7" fill="#f4f4f4" stroke="#222" stroke-width="1"/><path d="M422,1018 h5 M422,1020 h5" stroke="#666" stroke-width="0.8"/><path d="M413.5,1023.5 h17" stroke="#b8a870" stroke-width="1"/><text x="438" y="1031" font-size="14" fill="#000" >Open</text><path d="M494.5,1012.5 L510.5,1012.5 Q514.5,1012.5 514.5,1016.5 L514.5,1031.5 Q514.5,1035.5 510.5,1035.5 L494.5,1035.5 Q490.5,1035.5 490.5,1031.5 L490.5,1016.5 Q490.5,1012.5 494.5,1012.5 Z" fill="url(#gTool)" stroke="#262626" stroke-width="1"/><path d="M495.5,1032.5 L501.5,1026.5" stroke="#111" stroke-width="2"/><path d="M499,1022 L506,1029 L507,1026 L504,1023 L508,1019 L510,1020 L511,1018 L505,1012 L503,1014 L504,1016 L500,1020 L497,1019 Z" fill="#d8d8d8" stroke="#111" stroke-width="1"/><path d="M525.5,1012.5 L600.5,1012.5 Q604.5,1012.5 604.5,1016.5 L604.5,1031.5 Q604.5,1035.5 600.5,1035.5 L525.5,1035.5 Q521.5,1035.5 521.5,1031.5 L521.5,1016.5 Q521.5,1012.5 525.5,1012.5 Z" fill="url(#gMenu)" stroke="#262626" stroke-width="1"/><path d="M528.5,1016.5 h10 l4,4 v11.5 h-14 z" fill="#f0ecec" stroke="#1a1a1a" stroke-width="1"/><rect x="529.5" y="1017.5" width="11" height="6" fill="#e6aaa8"/><circle cx="537" cy="1020" r="1.4" fill="#fff"/><path d="M529,1024 q3,-2.5 6,0 t6,-0.5 v2.5 h-12 z" fill="#2a1a2a"/><rect x="529.5" y="1026" width="12" height="5.5" fill="#8e90d0"/><text x="550" y="1031" font-size="14" fill="#fff" >View</text><polygon points="593,1022 597,1017 601,1022" fill="#d0d0d0"/><polygon points="593,1026 597,1031 601,1026" fill="#d0d0d0"/><path d="M615.5,1012.5 L646.5,1012.5 Q650.5,1012.5 650.5,1016.5 L650.5,1031.5 Q650.5,1035.5 646.5,1035.5 L615.5,1035.5 Q611.5,1035.5 611.5,1031.5 L611.5,1016.5 Q611.5,1012.5 615.5,1012.5 Z" fill="url(#gMenu)" stroke="#262626" stroke-width="1"/><path d="M617,1020 v-3 h3 M631,1017 h3 v3 M634,1029 v3 h-3 M620,1032 h-3 v-3" stroke="#fff" stroke-width="1.5" fill="none"/><circle cx="625.5" cy="1024.5" r="3" fill="#4070c0" stroke="#ddd" stroke-width="1"/><polygon points="639,1022 643,1017 647,1022" fill="#d0d0d0"/><polygon points="639,1026 643,1031 647,1026" fill="#d0d0d0"/><path d="M661.5,1012.5 L677.5,1012.5 Q681.5,1012.5 681.5,1016.5 L681.5,1031.5 Q681.5,1035.5 677.5,1035.5 L661.5,1035.5 Q657.5,1035.5 657.5,1031.5 L657.5,1016.5 Q657.5,1012.5 661.5,1012.5 Z" fill="url(#gTool)" stroke="#262626" stroke-width="1"/><rect x="661" y="1017" width="13" height="13" fill="#ccc" stroke="#222" stroke-width="1"/><path d="M671,1022 L679,1030 L675,1030 L677,1034 L675,1035 L673,1031 L671,1033 Z" fill="#fff" stroke="#000" stroke-width="0.8"/><path d="M692.5,1012.5 L713.5,1012.5 Q713.5,1012.5 713.5,1012.5 L713.5,1035.5 Q713.5,1035.5 713.5,1035.5 L692.5,1035.5 Q688.5,1035.5 688.5,1031.5 L688.5,1016.5 Q688.5,1012.5 692.5,1012.5 Z" fill="url(#gMenu)" stroke="#262626" stroke-width="1"/><path d="M713.5,1012.5 L738.5,1012.5 Q738.5,1012.5 738.5,1012.5 L738.5,1035.5 Q738.5,1035.5 738.5,1035.5 L713.5,1035.5 Q713.5,1035.5 713.5,1035.5 L713.5,1012.5 Q713.5,1012.5 713.5,1012.5 Z" fill="url(#gMenu)" stroke="#262626" stroke-width="1"/><path d="M738.5,1012.5 L762.5,1012.5 Q762.5,1012.5 762.5,1012.5 L762.5,1035.5 Q762.5,1035.5 762.5,1035.5 L738.5,1035.5 Q738.5,1035.5 738.5,1035.5 L738.5,1012.5 Q738.5,1012.5 738.5,1012.5 Z" fill="url(#gSel)" stroke="#262626" stroke-width="1"/><path d="M762.5,1012.5 L783.5,1012.5 Q787.5,1012.5 787.5,1016.5 L787.5,1031.5 Q787.5,1035.5 783.5,1035.5 L762.5,1035.5 Q762.5,1035.5 762.5,1035.5 L762.5,1012.5 Q762.5,1012.5 762.5,1012.5 Z" fill="url(#gMenu)" stroke="#262626" stroke-width="1"/><rect x="693" y="1017" width="15" height="14" fill="#555" stroke="#7a7a7a" stroke-width="1"/><path d="M700.5,1017 V1031 M693,1024 H708" stroke="#777" stroke-width="1"/><rect x="718" y="1017" width="15" height="14" fill="#555" stroke="#7a7a7a" stroke-width="1"/><path d="M725.5,1017 V1031 M718,1024 H733" stroke="#777" stroke-width="1"/><rect x="767" y="1017" width="15" height="14" fill="#555" stroke="#7a7a7a" stroke-width="1"/><path d="M774.5,1017 V1031 M767,1024 H782" stroke="#777" stroke-width="1"/><rect x="693" y="1017" width="3" height="3" fill="#c8a070"/><rect x="701" y="1017" width="3" height="3" fill="#c8a070"/><rect x="693" y="1023" width="3" height="3" fill="#c8a070"/><rect x="701" y="1023" width="3" height="3" fill="#c8a070"/><path d="M720,1016 V1031 M725.5,1016 V1031 M731,1016 V1031" stroke="#b08a60" stroke-width="1.2"/><rect x="742" y="1016" width="17" height="16" fill="#9ab0d8"/><rect x="742" y="1016" width="9" height="8" fill="#f0a040"/><rect x="770" y="1016" width="6" height="16" fill="#666"/><rect x="777" y="1016" width="7" height="16" fill="#c89050"/><path d="M798.5,1012.5 L828.5,1012.5 Q832.5,1012.5 832.5,1016.5 L832.5,1031.5 Q832.5,1035.5 828.5,1035.5 L798.5,1035.5 Q794.5,1035.5 794.5,1031.5 L794.5,1016.5 Q794.5,1012.5 798.5,1012.5 Z" fill="url(#gMenu)" stroke="#262626" stroke-width="1"/><rect x="800" y="1017" width="13" height="13" fill="none" stroke="#bbb" stroke-width="1" stroke-dasharray="1,1"/><circle cx="806" cy="1022" r="1.6" fill="#fff"/><circle cx="804" cy="1026" r="1.6" fill="#fff"/><circle cx="808" cy="1026" r="1.6" fill="#fff"/><polygon points="821,1022 825,1017 829,1022" fill="#d0d0d0"/><polygon points="821,1026 825,1031 829,1026" fill="#d0d0d0"/><path d="M845.5,1012.5 L875.5,1012.5 Q879.5,1012.5 879.5,1016.5 L879.5,1031.5 Q879.5,1035.5 875.5,1035.5 L845.5,1035.5 Q841.5,1035.5 841.5,1031.5 L841.5,1016.5 Q841.5,1012.5 845.5,1012.5 Z" fill="url(#gMenu)" stroke="#262626" stroke-width="1"/><circle cx="855" cy="1024" r="5.5" fill="#5a5a5a" stroke="#6c6c6c" stroke-width="1.5"/><polygon points="868,1022 872,1017 876,1022" fill="#d0d0d0"/><polygon points="868,1026 872,1031 876,1026" fill="#d0d0d0"/><path d="M891.5,1012.5 L910.5,1012.5 Q910.5,1012.5 910.5,1012.5 L910.5,1035.5 Q910.5,1035.5 910.5,1035.5 L891.5,1035.5 Q887.5,1035.5 887.5,1031.5 L887.5,1016.5 Q887.5,1012.5 891.5,1012.5 Z" fill="url(#gTool)" stroke="#262626" stroke-width="1"/><g transform="rotate(-135 899 1023)"><path d="M894.5,1019 V1025.5 A4.5,4.5 0 0 0 903.5,1025.5 V1019" stroke="#222" stroke-width="4.2" fill="none"/><path d="M894.5,1019.5 V1025.5 A4.5,4.5 0 0 0 903.5,1025.5 V1019.5" stroke="#d8d8d8" stroke-width="2.6" fill="none"/><path d="M894.5,1019.5 V1022 M903.5,1019.5 V1022" stroke="#888" stroke-width="2.6"/></g><path d="M910.5,1012.5 L946.5,1012.5 Q950.5,1012.5 950.5,1016.5 L950.5,1031.5 Q950.5,1035.5 946.5,1035.5 L910.5,1035.5 Q910.5,1035.5 910.5,1035.5 L910.5,1012.5 Q910.5,1012.5 910.5,1012.5 Z" fill="url(#gMenu)" stroke="#262626" stroke-width="1"/><path d="M915,1024 H933 M918,1019 V1029 M923,1018 V1030 M928,1019 V1029" stroke="#ddd" stroke-width="1.2"/><rect x="922" y="1017" width="2" height="14" fill="#9cc0ff"/><polygon points="939,1022 943,1017 947,1022" fill="#d0d0d0"/><polygon points="939,1026 943,1031 947,1026" fill="#d0d0d0"/><path d="M962.5,1012.5 L985.5,1012.5 Q989.5,1012.5 989.5,1016.5 L989.5,1031.5 Q989.5,1035.5 985.5,1035.5 L962.5,1035.5 Q958.5,1035.5 958.5,1031.5 L958.5,1016.5 Q958.5,1012.5 962.5,1012.5 Z" fill="url(#gTool)" stroke="#262626" stroke-width="1"/><circle cx="971" cy="1024" r="7" fill="#f0f0e8" stroke="#111" stroke-width="1.2"/><path d="M971,1017 v7 h7 a7,7 0 0 0 -7,-7 z M971,1024 v7 a7,7 0 0 1 -7,-7 z" fill="#333"/><rect x="967.5" y="1020.5" width="3.5" height="3.5" fill="#555"/><rect x="971" y="1027.5" width="3.5" height="3.5" fill="#222"/><rect x="977" y="1009" width="11" height="29" fill="#6a6a6a" /><rect x="976" y="1008" width="1" height="30" fill="#000000" /><path d="M992.5,1012.5 L1023.5,1012.5 Q1027.5,1012.5 1027.5,1016.5 L1027.5,1031.5 Q1027.5,1035.5 1023.5,1035.5 L992.5,1035.5 Q988.5,1035.5 988.5,1031.5 L988.5,1016.5 Q988.5,1012.5 992.5,1012.5 Z" fill="url(#gMenu)" stroke="#262626" stroke-width="1"/><path d="M998,1019 l7,-3 l7,3 v9 l-7,3 l-7,-3 z" fill="#bdbdbd" stroke="#111" stroke-width="1"/><path d="M998,1019 l7,3 l7,-3 M1005,1022 v9" stroke="#777" stroke-width="1" fill="none"/><polygon points="1016,1022 1020,1017 1024,1022" fill="#d0d0d0"/><polygon points="1016,1026 1020,1031 1024,1026" fill="#d0d0d0"/><text x="1043" y="1031" font-size="14" fill="#000" >View</text><text x="1099" y="1031" font-size="14" fill="#000" >Select</text><text x="1163" y="1031" font-size="14" fill="#000" >Add</text><text x="1213" y="1031" font-size="14" fill="#000" >Mesh</text><path d="M1268.5,1012.5 L1385.5,1012.5 Q1389.5,1012.5 1389.5,1016.5 L1389.5,1031.5 Q1389.5,1035.5 1385.5,1035.5 L1268.5,1035.5 Q1264.5,1035.5 1264.5,1031.5 L1264.5,1016.5 Q1264.5,1012.5 1268.5,1012.5 Z" fill="url(#gMenu)" stroke="#262626" stroke-width="1"/><path d="M1273,1019 l6,-3 l6,3 v9 l-6,3 l-6,-3 z" fill="#a8a8a8" stroke="#222" stroke-width="1"/><path d="M1279,1022 v9 M1273,1019 l6,3 l6,-3" stroke="#777" stroke-width="1" fill="none"/><circle cx="1273" cy="1018" r="1.8" fill="#f0b060" stroke="#222" stroke-width="0.8"/><circle cx="1279" cy="1021" r="1.8" fill="#f0b060" stroke="#222" stroke-width="0.8"/><circle cx="1273" cy="1028" r="1.8" fill="#f0b060" stroke="#222" stroke-width="0.8"/><circle cx="1280" cy="1031" r="1.8" fill="#f0b060" stroke="#222" stroke-width="0.8"/><text x="1294" y="1031" font-size="14" fill="#fff" >Edit Mode</text><polygon points="1378,1022 1382,1017 1386,1022" fill="#d0d0d0"/><polygon points="1378,1026 1382,1031 1386,1026" fill="#d0d0d0"/><path d="M1400.5,1012.5 L1431.5,1012.5 Q1435.5,1012.5 1435.5,1016.5 L1435.5,1031.5 Q1435.5,1035.5 1431.5,1035.5 L1400.5,1035.5 Q1396.5,1035.5 1396.5,1031.5 L1396.5,1016.5 Q1396.5,1012.5 1400.5,1012.5 Z" fill="url(#gMenu)" stroke="#262626" stroke-width="1"/><circle cx="1410" cy="1024" r="6.5" fill="#eee" stroke="#222" stroke-width="1"/><polygon points="1424,1022 1428,1017 1432,1022" fill="#d0d0d0"/><polygon points="1424,1026 1428,1031 1432,1026" fill="#d0d0d0"/><path d="M1446.5,1012.5 L1477.5,1012.5 Q1481.5,1012.5 1481.5,1016.5 L1481.5,1031.5 Q1481.5,1035.5 1477.5,1035.5 L1446.5,1035.5 Q1442.5,1035.5 1442.5,1031.5 L1442.5,1016.5 Q1442.5,1012.5 1446.5,1012.5 Z" fill="url(#gMenu)" stroke="#262626" stroke-width="1"/><circle cx="1455" cy="1022" r="5" fill="#ddd" stroke="#222" stroke-width="1"/><circle cx="1459" cy="1027" r="5" fill="#eee" stroke="#222" stroke-width="1"/><rect x="1455" y="1022" width="5" height="5" fill="#4a80d0"/><polygon points="1470,1022 1474,1017 1478,1022" fill="#d0d0d0"/><polygon points="1470,1026 1474,1031 1478,1026" fill="#d0d0d0"/><path d="M1492.5,1012.5 L1512.5,1012.5 Q1512.5,1012.5 1512.5,1012.5 L1512.5,1035.5 Q1512.5,1035.5 1512.5,1035.5 L1492.5,1035.5 Q1488.5,1035.5 1488.5,1031.5 L1488.5,1016.5 Q1488.5,1012.5 1492.5,1012.5 Z" fill="url(#gMenu)" stroke="#262626" stroke-width="1"/><path d="M1512.5,1012.5 L1537.5,1012.5 Q1537.5,1012.5 1537.5,1012.5 L1537.5,1035.5 Q1537.5,1035.5 1537.5,1035.5 L1512.5,1035.5 Q1512.5,1035.5 1512.5,1035.5 L1512.5,1012.5 Q1512.5,1012.5 1512.5,1012.5 Z" fill="url(#gSel)" stroke="#262626" stroke-width="1"/><path d="M1537.5,1012.5 L1561.5,1012.5 Q1561.5,1012.5 1561.5,1012.5 L1561.5,1035.5 Q1561.5,1035.5 1561.5,1035.5 L1537.5,1035.5 Q1537.5,1035.5 1537.5,1035.5 L1537.5,1012.5 Q1537.5,1012.5 1537.5,1012.5 Z" fill="url(#gMenu)" stroke="#262626" stroke-width="1"/><path d="M1561.5,1012.5 L1586.5,1012.5 Q1586.5,1012.5 1586.5,1012.5 L1586.5,1035.5 Q1586.5,1035.5 1586.5,1035.5 L1561.5,1035.5 Q1561.5,1035.5 1561.5,1035.5 L1561.5,1012.5 Q1561.5,1012.5 1561.5,1012.5 Z" fill="url(#gMenu)" stroke="#262626" stroke-width="1"/><path d="M1586.5,1012.5 L1673.5,1012.5 Q1677.5,1012.5 1677.5,1016.5 L1677.5,1031.5 Q1677.5,1035.5 1673.5,1035.5 L1586.5,1035.5 Q1586.5,1035.5 1586.5,1035.5 L1586.5,1012.5 Q1586.5,1012.5 1586.5,1012.5 Z" fill="url(#gMenu)" stroke="#262626" stroke-width="1"/><path d="M1500,1026 v-10" stroke="#4a80ff" stroke-width="2"/><path d="M1500,1026 l-7,5" stroke="#ff3030" stroke-width="2"/><path d="M1500,1026 l7,5" stroke="#30d030" stroke-width="2"/><path d="M1517,1032 l13,-13" stroke="#cde" stroke-width="2"/><path d="M1524,1018 h7 v7 z" fill="#cde"/><path d="M1542,1032 q2,-12 14,-13" stroke="#4a6aa0" stroke-width="2.5" fill="none"/><path d="M1567,1032 l9,-9" stroke="#4a6aa0" stroke-width="2.5"/><rect x="1574" y="1017" width="7" height="7" fill="#4a6aa0"/><text x="1597" y="1031" font-size="14" fill="#fff" >Global</text><polygon points="1666,1022 1670,1017 1674,1022" fill="#d0d0d0"/><polygon points="1666,1026 1670,1031 1674,1026" fill="#d0d0d0"/><path d="M1688.5,1012.5 L1708.5,1012.5 Q1708.5,1012.5 1708.5,1012.5 L1708.5,1035.5 Q1708.5,1035.5 1708.5,1035.5 L1688.5,1035.5 Q1684.5,1035.5 1684.5,1031.5 L1684.5,1016.5 Q1684.5,1012.5 1688.5,1012.5 Z" fill="url(#gTool)" stroke="#262626" stroke-width="1"/><path d="M1708.5,1012.5 L1733.5,1012.5 Q1733.5,1012.5 1733.5,1012.5 L1733.5,1035.5 Q1733.5,1035.5 1733.5,1035.5 L1708.5,1035.5 Q1708.5,1035.5 1708.5,1035.5 L1708.5,1012.5 Q1708.5,1012.5 1708.5,1012.5 Z" fill="url(#gMid)" stroke="#262626" stroke-width="1"/><path d="M1733.5,1012.5 L1753.5,1012.5 Q1757.5,1012.5 1757.5,1016.5 L1757.5,1031.5 Q1757.5,1035.5 1753.5,1035.5 L1733.5,1035.5 Q1733.5,1035.5 1733.5,1035.5 L1733.5,1012.5 Q1733.5,1012.5 1733.5,1012.5 Z" fill="url(#gTool)" stroke="#262626" stroke-width="1"/><path d="M1691,1019 l7,-3 l7,3 v9 l-7,3 l-7,-3 z" fill="#bcbcbc" stroke="#888" stroke-width="1"/><path d="M1716,1019 l7,-3 l7,3 v9 l-7,3 l-7,-3 z" fill="#bcbcbc" stroke="#888" stroke-width="1"/><path d="M1740,1019 l7,-3 l7,3 v9 l-7,3 l-7,-3 z" fill="#bcbcbc" stroke="#888" stroke-width="1"/><rect x="1740" y="1019" width="6" height="11" fill="#e0b080"/><rect x="1711" y="1019" width="3" height="10" fill="#e09040"/><path d="M1769.5,1012.5 L1785.5,1012.5 Q1789.5,1012.5 1789.5,1016.5 L1789.5,1031.5 Q1789.5,1035.5 1785.5,1035.5 L1769.5,1035.5 Q1765.5,1035.5 1765.5,1031.5 L1765.5,1016.5 Q1765.5,1012.5 1769.5,1012.5 Z" fill="url(#gMid)" stroke="#262626" stroke-width="1"/><rect x="1771" y="1018" width="12" height="12" fill="#ccc" stroke="#000" stroke-width="1"/><rect x="1769" y="1016" width="4" height="4" fill="#fff" stroke="#000" stroke-width="1"/><rect x="1781" y="1028" width="4" height="4" fill="#fff" stroke="#000" stroke-width="1"/><rect x="1769" y="1028" width="4" height="4" fill="#fff" stroke="#000" stroke-width="1"/><path d="M1800.5,1012.5 L1831.5,1012.5 Q1835.5,1012.5 1835.5,1016.5 L1835.5,1031.5 Q1835.5,1035.5 1831.5,1035.5 L1800.5,1035.5 Q1796.5,1035.5 1796.5,1031.5 L1796.5,1016.5 Q1796.5,1012.5 1800.5,1012.5 Z" fill="url(#gMenu)" stroke="#262626" stroke-width="1"/><circle cx="1810" cy="1024" r="5.5" fill="#5a5a5a" stroke="#6c6c6c" stroke-width="1.5"/><polygon points="1824,1022 1828,1017 1832,1022" fill="#d0d0d0"/><polygon points="1824,1026 1828,1031 1832,1026" fill="#d0d0d0"/><path d="M1846.5,1012.5 L1866.5,1012.5 Q1866.5,1012.5 1866.5,1012.5 L1866.5,1035.5 Q1866.5,1035.5 1866.5,1035.5 L1846.5,1035.5 Q1842.5,1035.5 1842.5,1031.5 L1842.5,1016.5 Q1842.5,1012.5 1846.5,1012.5 Z" fill="url(#gTool)" stroke="#262626" stroke-width="1"/><g transform="rotate(-135 1854 1023)"><path d="M1849.5,1019 V1025.5 A4.5,4.5 0 0 0 1858.5,1025.5 V1019" stroke="#222" stroke-width="4.2" fill="none"/><path d="M1849.5,1019.5 V1025.5 A4.5,4.5 0 0 0 1858.5,1025.5 V1019.5" stroke="#d8d8d8" stroke-width="2.6" fill="none"/><path d="M1849.5,1019.5 V1022 M1858.5,1019.5 V1022" stroke="#888" stroke-width="2.6"/></g><path d="M1866.5,1012.5 L1906.5,1012.5 Q1906.5,1012.5 1906.5,1012.5 L1906.5,1035.5 Q1906.5,1035.5 1906.5,1035.5 L1866.5,1035.5 Q1866.5,1035.5 1866.5,1035.5 L1866.5,1012.5 Q1866.5,1012.5 1866.5,1012.5 Z" fill="url(#gMenu)" stroke="#262626" stroke-width="1"/><path d="M1871,1024 H1889 M1874,1019 V1029 M1879,1018 V1030 M1884,1019 V1029" stroke="#ddd" stroke-width="1.2"/><rect x="1878" y="1017" width="2" height="14" fill="#9cc0ff"/><polygon points="1895,1022 1899,1017 1903,1022" fill="#d0d0d0"/><polygon points="1895,1026 1899,1031 1903,1026" fill="#d0d0d0"/><path d="M1910.5,1012.5 L1935.5,1012.5 Q1939.5,1012.5 1939.5,1016.5 L1939.5,1031.5 Q1939.5,1035.5 1935.5,1035.5 L1910.5,1035.5 Q1906.5,1035.5 1906.5,1031.5 L1906.5,1016.5 Q1906.5,1012.5 1910.5,1012.5 Z" fill="url(#gTool)" stroke="#262626" stroke-width="1"/><circle cx="1916" cy="1019" r="4" fill="#fff" stroke="#3070d0" stroke-width="2"/><rect x="1020" y="354" width="228" height="44" fill="#353c40"/><rect x="1020" y="354" width="228" height="1.2" fill="#24282a"/><rect x="1020" y="354" width="1" height="44" fill="#2c3134"/><circle cx="1134.5" cy="240.5" r="114" fill="#353c40"/><text transform="translate(1046,266.5) scale(0.90,1.05)" font-size="128" font-style="italic" fill="#ffffff" stroke="#ffffff" stroke-width="0.8">F</text><text transform="translate(1118,266.5) scale(0.99,1.05)" font-size="128" font-style="italic" fill="#27a2db" stroke="#27a2db" stroke-width="0.8">M</text><text x="1050" y="283" font-size="13.5" fill="#27a2db" textLength="173" lengthAdjust="spacing">FRANCESCO MILANESE</text><text x="1073" y="309.5" font-size="23.5" font-style="italic" fill="#ffffff" textLength="125" lengthAdjust="spacing">3D Models</text><text x="1039" y="385.5" font-size="26" font-style="italic" font-weight="bold" fill="#c8c612" stroke="#c8c612" stroke-width="0.7" textLength="186" lengthAdjust="spacing">Stock Models</text><line x1="0.00" y1="43.50" x2="13.50" y2="57.00" stroke="#c8c8c8" stroke-width="1.3" /><line x1="0.00" y1="42.00" x2="15.00" y2="57.00" stroke="#000000" stroke-width="1.2" /><line x1="0.00" y1="48.50" x2="8.50" y2="57.00" stroke="#c8c8c8" stroke-width="1.3" /><line x1="0.00" y1="47.00" x2="10.00" y2="57.00" stroke="#000000" stroke-width="1.2" /><line x1="0.00" y1="53.50" x2="3.50" y2="57.00" stroke="#c8c8c8" stroke-width="1.3" /><line x1="0.00" y1="52.00" x2="5.00" y2="57.00" stroke="#000000" stroke-width="1.2" /><line x1="961.50" y1="59.00" x2="976.00" y2="73.50" stroke="#d0d0d0" stroke-width="1.2" /><line x1="963.00" y1="59.00" x2="976.00" y2="72.00" stroke="#000000" stroke-width="1.2" /><line x1="966.50" y1="59.00" x2="976.00" y2="68.50" stroke="#d0d0d0" stroke-width="1.2" /><line x1="968.00" y1="59.00" x2="976.00" y2="67.00" stroke="#000000" stroke-width="1.2" /><line x1="971.50" y1="59.00" x2="976.00" y2="63.50" stroke="#d0d0d0" stroke-width="1.2" /><line x1="973.00" y1="59.00" x2="976.00" y2="62.00" stroke="#000000" stroke-width="1.2" /><line x1="1905.50" y1="23.00" x2="1920.00" y2="37.50" stroke="#d0d0d0" stroke-width="1.2" /><line x1="1907.00" y1="23.00" x2="1920.00" y2="36.00" stroke="#000000" stroke-width="1.2" /><line x1="1910.50" y1="23.00" x2="1920.00" y2="32.50" stroke="#d0d0d0" stroke-width="1.2" /><line x1="1912.00" y1="23.00" x2="1920.00" y2="31.00" stroke="#000000" stroke-width="1.2" /><line x1="1915.50" y1="23.00" x2="1920.00" y2="27.50" stroke="#d0d0d0" stroke-width="1.2" /><line x1="1917.00" y1="23.00" x2="1920.00" y2="26.00" stroke="#000000" stroke-width="1.2" /><line x1="1905.50" y1="59.00" x2="1920.00" y2="73.50" stroke="#d0d0d0" stroke-width="1.2" /><line x1="1907.00" y1="59.00" x2="1920.00" y2="72.00" stroke="#000000" stroke-width="1.2" /><line x1="1910.50" y1="59.00" x2="1920.00" y2="68.50" stroke="#d0d0d0" stroke-width="1.2" /><line x1="1912.00" y1="59.00" x2="1920.00" y2="67.00" stroke="#000000" stroke-width="1.2" /><line x1="1915.50" y1="59.00" x2="1920.00" y2="63.50" stroke="#d0d0d0" stroke-width="1.2" /><line x1="1917.00" y1="59.00" x2="1920.00" y2="62.00" stroke="#000000" stroke-width="1.2" /><line x1="0.00" y1="1024.50" x2="13.50" y2="1038.00" stroke="#c8c8c8" stroke-width="1.3" /><line x1="0.00" y1="1023.00" x2="15.00" y2="1038.00" stroke="#000000" stroke-width="1.2" /><line x1="0.00" y1="1029.50" x2="8.50" y2="1038.00" stroke="#c8c8c8" stroke-width="1.3" /><line x1="0.00" y1="1028.00" x2="10.00" y2="1038.00" stroke="#000000" stroke-width="1.2" /><line x1="0.00" y1="1034.50" x2="3.50" y2="1038.00" stroke="#c8c8c8" stroke-width="1.3" /><line x1="0.00" y1="1033.00" x2="5.00" y2="1038.00" stroke="#000000" stroke-width="1.2" /><line x1="977.00" y1="1024.50" x2="990.50" y2="1038.00" stroke="#c8c8c8" stroke-width="1.3" /><line x1="977.00" y1="1023.00" x2="992.00" y2="1038.00" stroke="#000000" stroke-width="1.2" /><line x1="977.00" y1="1029.50" x2="985.50" y2="1038.00" stroke="#c8c8c8" stroke-width="1.3" /><line x1="977.00" y1="1028.00" x2="987.00" y2="1038.00" stroke="#000000" stroke-width="1.2" /><line x1="977.00" y1="1034.50" x2="980.50" y2="1038.00" stroke="#c8c8c8" stroke-width="1.3" /><line x1="977.00" y1="1033.00" x2="982.00" y2="1038.00" stroke="#000000" stroke-width="1.2" /><path d="M-1,86 L12,86 Q16,86 16,90 L16,99 Q16,103 12,103 L-1,103 Q-5,103 -5,99 L-5,90 Q-5,86 -1,86 Z" fill="#2d2d2d"/><path d="M7.5,90.5 v7 M4.0,94 h7" stroke="#8e8e8e" stroke-width="2.2"/><path d="M961,86 L972,86 Q976,86 976,90 L976,99 Q976,103 972,103 L961,103 Q957,103 957,99 L957,90 Q957,86 961,86 Z" fill="#2d2d2d"/><path d="M966,90.5 v7 M962.5,94 h7" stroke="#8e8e8e" stroke-width="2.2"/><path d="M981,86 L989,86 Q993,86 993,90 L993,99 Q993,103 989,103 L981,103 Q977,103 977,99 L977,90 Q977,86 981,86 Z" fill="#2d2d2d"/><path d="M984.5,90.5 v7 M981.0,94 h7" stroke="#8e8e8e" stroke-width="2.2"/><path d="M1905,86 L1921,86 Q1925,86 1925,90 L1925,99 Q1925,103 1921,103 L1905,103 Q1901,103 1901,99 L1901,90 Q1901,86 1905,86 Z" fill="#2d2d2d"/><path d="M1910,90.5 v7 M1906.5,94 h7" stroke="#8e8e8e" stroke-width="2.2"/><rect x="977" y="58" width="1" height="950" fill="#4a4a4a" /><rect x="0" y="58" width="1" height="950" fill="#4e4e4e" /><rect x="0" y="58" width="976" height="1" fill="#3e3e3e" /><text x="1002" y="84" font-size="14" fill="#ffffff" >User Persp</text><text x="1002" y="109" font-size="14" fill="#ffffff" >Meters</text><text x="1052" y="995" font-size="14" fill="#ffffff" textLength="166">(1) table_tent_template_7</text><line x1="1003.00" y1="982.00" x2="1003.00" y2="958.00" stroke="#1010d0" stroke-width="2" /><line x1="1003.00" y1="982.00" x2="984.00" y2="976.50" stroke="#20c020" stroke-width="2" /><line x1="1003.00" y1="982.00" x2="1019.00" y2="976.50" stroke="#c01020" stroke-width="2" /><text x="1006" y="956" font-size="11" fill="#3030c0" >z</text><text x="986" y="975" font-size="11" fill="#50a050" >y</text><text x="1021" y="973" font-size="10" fill="#802030" >x</text>
</svg>
</body></html>
